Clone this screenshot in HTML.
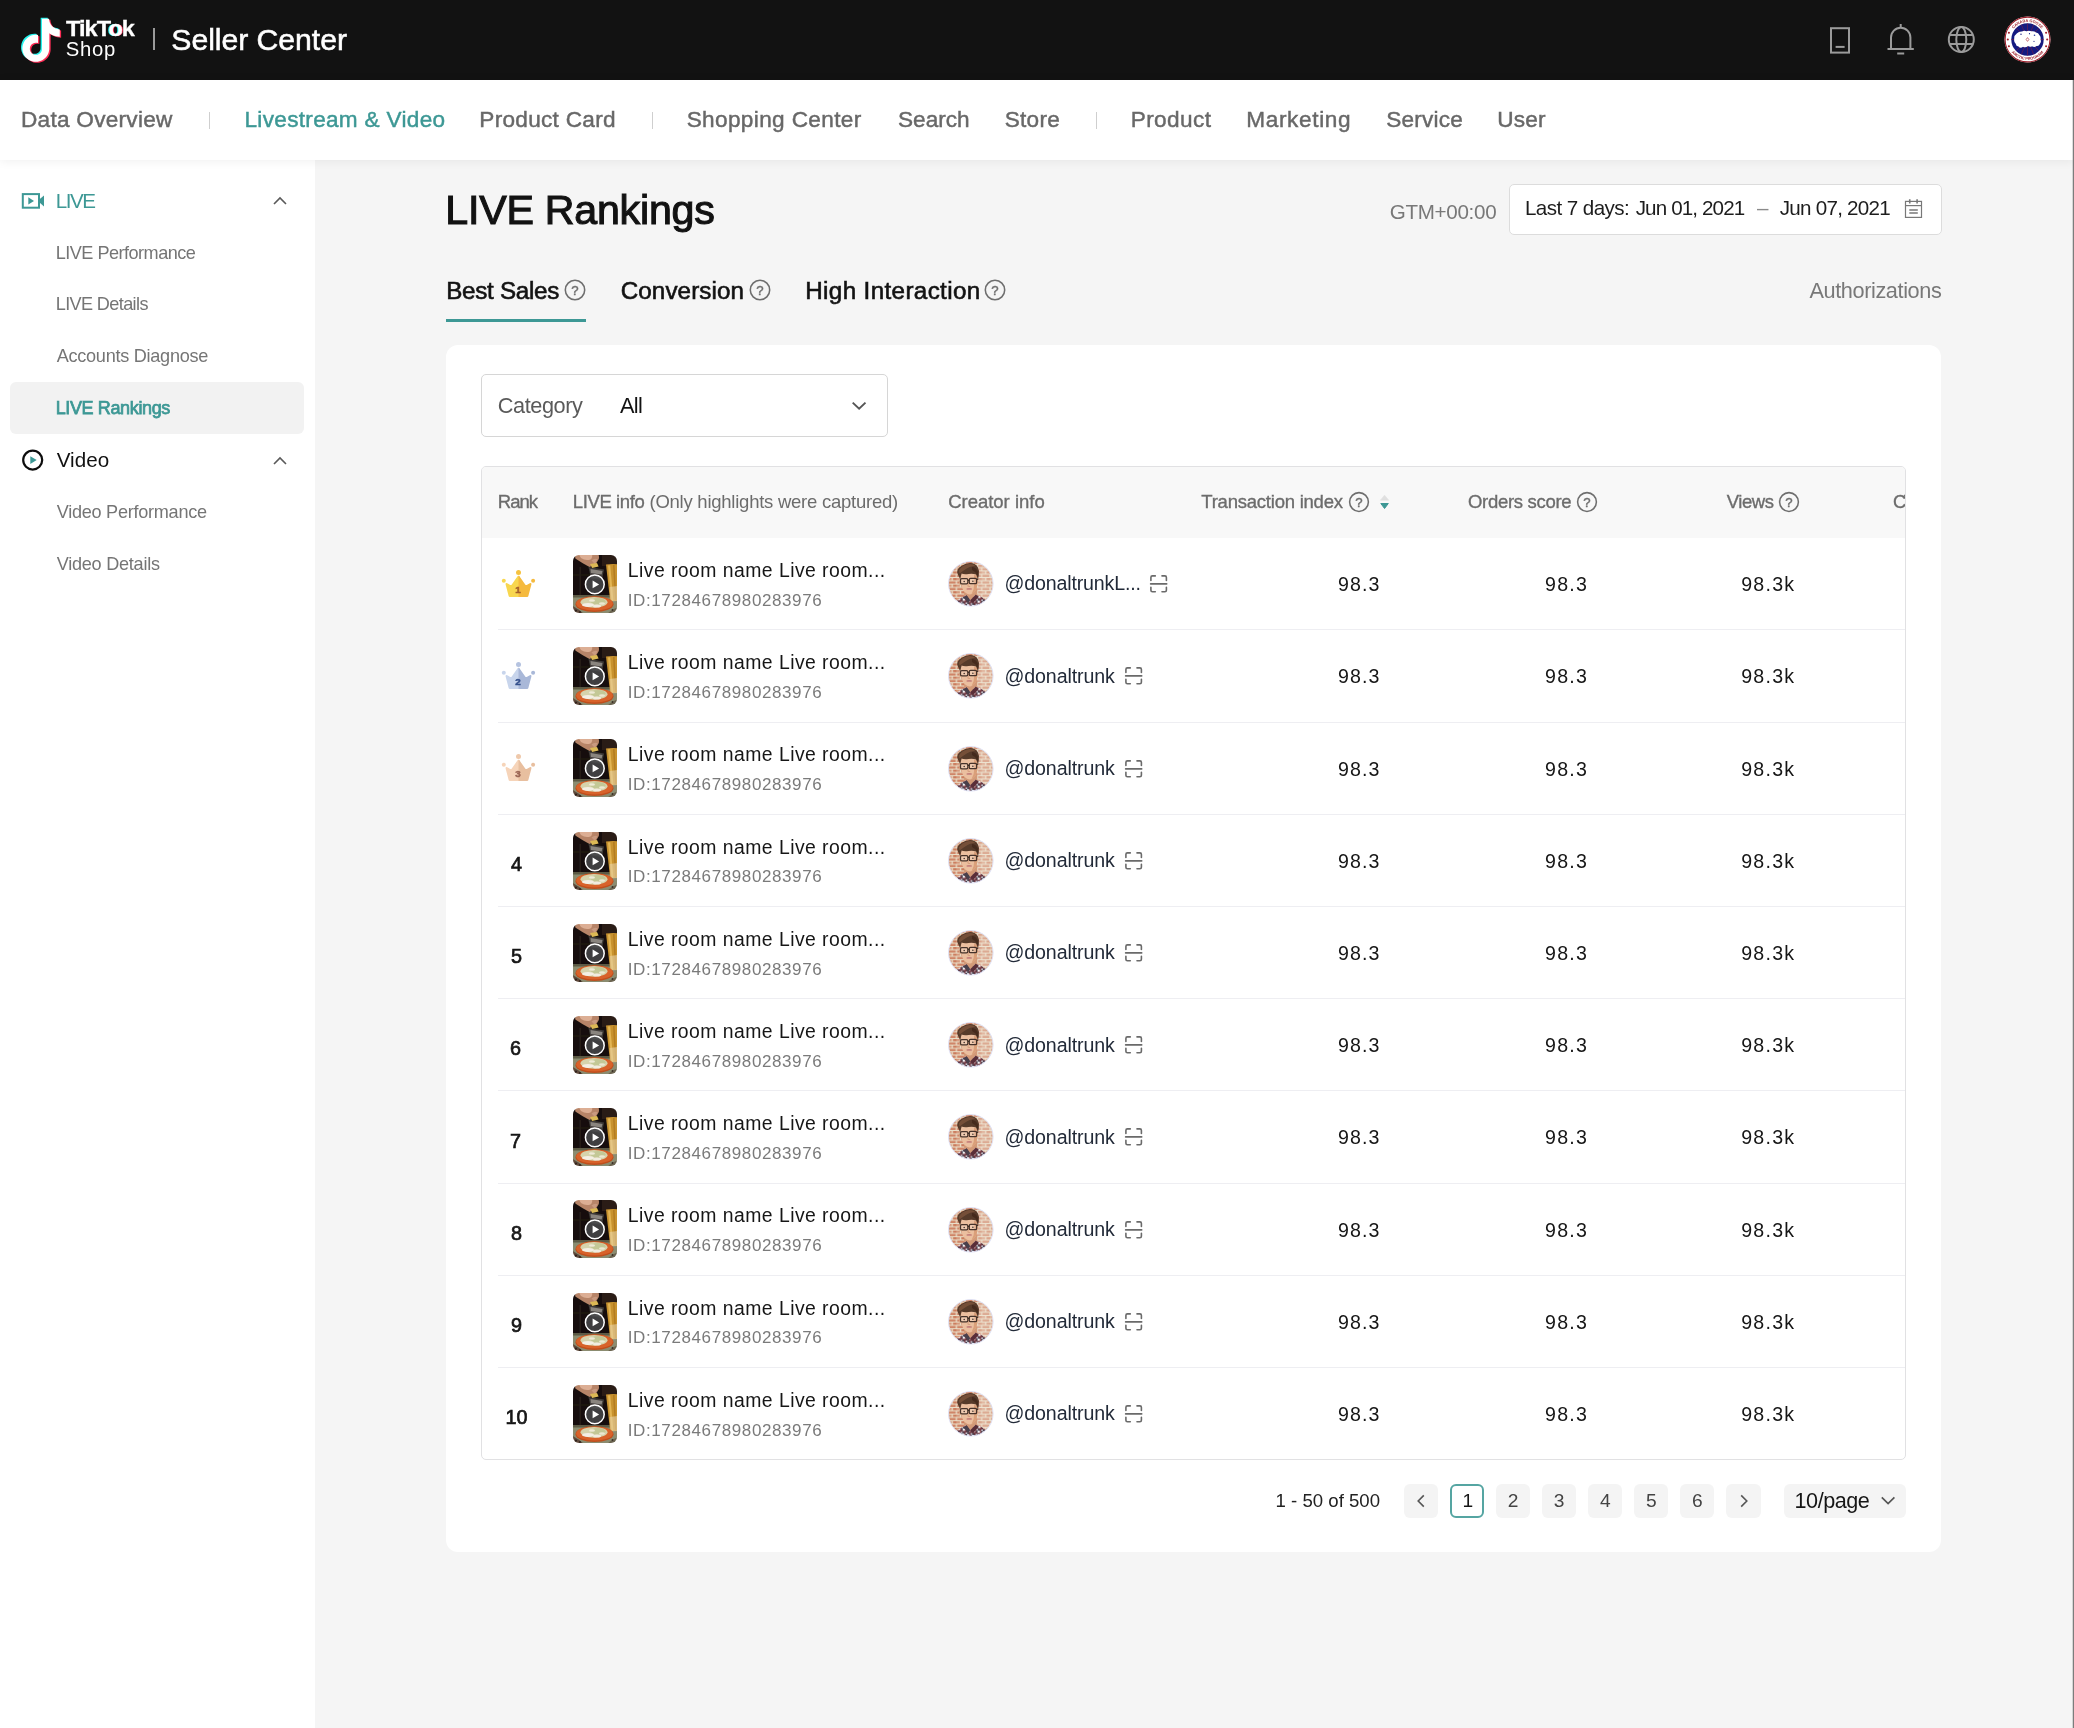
<!DOCTYPE html>
<html lang="en"><head><meta charset="utf-8"><title>LIVE Rankings - TikTok Shop Seller Center</title>
<style>
html,body{margin:0;padding:0}
body{width:2074px;height:1728px;position:relative;overflow:hidden;background:#f5f5f5;font-family:"Liberation Sans",sans-serif;-webkit-font-smoothing:antialiased}
span{display:block}
svg{display:block;overflow:visible}
</style></head><body><div id="app" style="position:absolute;left:0;top:0;width:2074px;height:1728px;overflow:hidden;will-change:transform">
<div style="position:absolute;left:0;top:0;width:2074px;height:79.5px;background:#121212"></div>
<svg style="position:absolute;left:16.2px;top:16.6px" width="50.6" height="47.0" viewBox="-2 -1 28.23 26.23">
<path d="M12.525.02c1.31-.02 2.61-.01 3.91-.02.08 1.53.63 3.09 1.75 4.17 1.12 1.11 2.7 1.62 4.24 1.79v4.03c-1.44-.05-2.89-.35-4.2-.97-.57-.26-1.1-.59-1.62-.93-.01 2.92.01 5.84-.02 8.75-.08 1.4-.54 2.79-1.35 3.94-1.31 1.92-3.58 3.17-5.91 3.21-1.43.08-2.86-.31-4.08-1.03-2.02-1.19-3.44-3.37-3.65-5.71-.02-.5-.03-1-.01-1.49.18-1.9 1.12-3.72 2.58-4.96 1.66-1.44 3.98-2.13 6.15-1.72.02 1.48-.04 2.96-.04 4.44-.99-.32-2.15-.23-3.02.37-.63.41-1.11 1.04-1.36 1.75-.21.51-.15 1.07-.14 1.61.24 1.64 1.82 3.02 3.5 2.87 1.12-.01 2.19-.66 2.77-1.61.19-.33.4-.67.41-1.06.1-1.79.06-3.57.07-5.36.01-4.03-.01-8.05.02-12.07z" fill="#25f4ee" transform="translate(-0.75,-0.6)"/>
<path d="M12.525.02c1.31-.02 2.61-.01 3.91-.02.08 1.53.63 3.09 1.75 4.17 1.12 1.11 2.7 1.62 4.24 1.79v4.03c-1.44-.05-2.89-.35-4.2-.97-.57-.26-1.1-.59-1.62-.93-.01 2.92.01 5.84-.02 8.75-.08 1.4-.54 2.79-1.35 3.94-1.31 1.92-3.58 3.17-5.91 3.21-1.43.08-2.86-.31-4.08-1.03-2.02-1.19-3.44-3.37-3.65-5.71-.02-.5-.03-1-.01-1.49.18-1.9 1.12-3.72 2.58-4.96 1.66-1.44 3.98-2.13 6.15-1.72.02 1.48-.04 2.96-.04 4.44-.99-.32-2.15-.23-3.02.37-.63.41-1.11 1.04-1.36 1.75-.21.51-.15 1.07-.14 1.61.24 1.64 1.82 3.02 3.5 2.87 1.12-.01 2.19-.66 2.77-1.61.19-.33.4-.67.41-1.06.1-1.79.06-3.57.07-5.36.01-4.03-.01-8.05.02-12.07z" fill="#fe2c55" transform="translate(0.75,0.6)"/>
<path d="M12.525.02c1.31-.02 2.61-.01 3.91-.02.08 1.53.63 3.09 1.75 4.17 1.12 1.11 2.7 1.62 4.24 1.79v4.03c-1.44-.05-2.89-.35-4.2-.97-.57-.26-1.1-.59-1.62-.93-.01 2.92.01 5.84-.02 8.75-.08 1.4-.54 2.79-1.35 3.94-1.31 1.92-3.58 3.17-5.91 3.21-1.43.08-2.86-.31-4.08-1.03-2.02-1.19-3.44-3.37-3.65-5.71-.02-.5-.03-1-.01-1.49.18-1.9 1.12-3.72 2.58-4.96 1.66-1.44 3.98-2.13 6.15-1.72.02 1.48-.04 2.96-.04 4.44-.99-.32-2.15-.23-3.02.37-.63.41-1.11 1.04-1.36 1.75-.21.51-.15 1.07-.14 1.61.24 1.64 1.82 3.02 3.5 2.87 1.12-.01 2.19-.66 2.77-1.61.19-.33.4-.67.41-1.06.1-1.79.06-3.57.07-5.36.01-4.03-.01-8.05.02-12.07z" fill="#fff"/>
</svg>
<span style="position:absolute;left:66.00px;top:18.00px;font-size:21.6px;line-height:1;color:#fff;white-space:pre;letter-spacing:-0.873px;font-weight:700;-webkit-text-stroke:0.3px #fff;transform-origin:0 50%;transform:scaleX(1.09);">TikT<b style="font-weight:700;text-shadow:-1px .4px 0 #25f4ee,1px -.4px 0 #fe2c55">o</b>k</span>
<span style="position:absolute;left:65.80px;top:39.00px;font-size:20.3px;line-height:1;color:#fff;white-space:pre;letter-spacing:0.705px;">Shop</span>
<div style="position:absolute;left:153px;top:28px;width:1.5px;height:22px;background:#9a9a9a"></div>
<span style="position:absolute;left:171.30px;top:25.00px;font-size:30.2px;line-height:1;color:#fff;white-space:pre;letter-spacing:-0.043px;-webkit-text-stroke:0.55px #fff;">Seller Center</span>
<svg style="position:absolute;left:1826px;top:23px" width="30" height="34" viewBox="1826 23 30 34" fill="none" stroke="#9b9b9b" stroke-width="2"><rect x="1831" y="28.2" width="18" height="24.4"/><path d="M1835.600 46.900H1844.600"/></svg>
<svg style="position:absolute;left:1884px;top:20px" width="34" height="38" viewBox="1884 20 34 38" fill="none" stroke="#9b9b9b" stroke-width="2"><path d="M1900.700 24V27.500"/><path d="M1891 49 V37.500 A9.700 9.700 0 0 1 1910.400 37.500 V49"/><path d="M1887.500 49H1913.800"/><path d="M1897.200 53.500H1904.200"/></svg>
<svg style="position:absolute;left:1945px;top:23px" width="33" height="33" viewBox="1945 23 33 33" fill="none" stroke="#9b9b9b" stroke-width="2"><circle cx="1961.300" cy="39.500" r="12.500"/><ellipse cx="1961.300" cy="39.500" rx="5" ry="12.500"/><path d="M1949.800 35H1972.800M1949.800 44H1972.800"/></svg>
<svg style="position:absolute;left:2004px;top:16px" width="47" height="47" viewBox="-23.500 -23.500 47 47">
<defs><path id="cgt" d="M-17.600 0 A17.600 17.600 0 0 1 17.600 0"/><path id="cgb" d="M-20.400 0 A20.400 20.400 0 0 0 20.400 0"/></defs>
<circle r="23" fill="#fff"/><circle r="22.400" fill="none" stroke="#9c1f2b" stroke-width="1.100"/>
<circle r="16.200" fill="#141a80"/>
<g stroke="#8c1f3a" stroke-width=".5"><path d="M0 -16.200V16.200M-16.200 0H16.200M-11.400 -11.400L11.400 11.400M-11.400 11.400L11.400 -11.400M-6.200 -15L6.200 15M6.200 -15L-6.200 15"/></g>
<path d="M-13.300 -.5 Q-13.600 -4 -10.500 -6.200 Q-8.500 -8.300 -5.500 -8 Q-3.500 -9.200 -1 -8.300 Q1.500 -9.300 4 -8.200 Q6.500 -8.800 8.500 -7 Q11 -6.800 11.800 -4.500 Q13.800 -2.500 13 0 Q14.200 2.500 12.300 4.500 Q11.500 7 9 6.500 Q7 8.300 4.500 6.800 Q2.500 8 .5 6.500 Q-2 8.800 -4.500 7.200 Q-7 9.300 -9 7 Q-11.500 6.800 -11.800 4.300 Q-13.800 2.500 -13.300 -.5Z" fill="#fff"/>
<circle cx="-6.500" cy="-5.200" r=".7" fill="#141a80"/><circle cx="2" cy="-5.800" r=".6" fill="#141a80"/><circle cx="7" cy="-4.200" r=".8" fill="#2b3ba0"/><circle cx="6.500" cy="1.800" r=".6" fill="#141a80"/>
<path d="M0 -1.900L1.400 0L0 1.900L-1.400 0Z" fill="#fff" stroke="#a3202c" stroke-width=".6"/>
<g fill="#a3202c"><circle cx="-18.600" cy="-6.800" r="1.050"/><circle cx="-19.700" cy="0" r="1.050"/><circle cx="-18.600" cy="6.800" r="1.050"/><circle cx="18.600" cy="-6.800" r="1.050"/><circle cx="19.700" cy="0" r="1.050"/><circle cx="18.600" cy="6.800" r="1.050"/></g>
<text font-family="Liberation Sans, sans-serif" font-weight="700" font-size="3.900" fill="#9c1f2b" text-anchor="middle"><textPath href="#cgt" startOffset="50%">CANADA GOOSE</textPath></text>
<text font-family="Liberation Sans, sans-serif" font-weight="700" font-size="3.900" fill="#9c1f2b" text-anchor="middle"><textPath href="#cgb" startOffset="50%">ARCTIC PROGRAM</textPath></text>
</svg>
<div style="position:absolute;left:0;top:79.5px;width:2074px;height:80.5px;background:#fff;box-shadow:0 1px 10px rgba(0,0,0,.065);z-index:3"></div>
<span style="position:absolute;left:21.00px;top:109.00px;font-size:22.6px;line-height:1;color:#686868;white-space:pre;letter-spacing:0.263px;-webkit-text-stroke:0.45px #686868;z-index:4;">Data Overview</span>
<span style="position:absolute;left:244.50px;top:109.00px;font-size:22.6px;line-height:1;color:#3d9895;white-space:pre;letter-spacing:0.298px;-webkit-text-stroke:0.45px #3d9895;z-index:4;">Livestream &amp; Video</span>
<span style="position:absolute;left:479.30px;top:109.00px;font-size:22.6px;line-height:1;color:#686868;white-space:pre;letter-spacing:0.287px;-webkit-text-stroke:0.45px #686868;z-index:4;">Product Card</span>
<span style="position:absolute;left:686.70px;top:109.00px;font-size:22.6px;line-height:1;color:#686868;white-space:pre;letter-spacing:0.354px;-webkit-text-stroke:0.45px #686868;z-index:4;">Shopping Center</span>
<span style="position:absolute;left:898.00px;top:109.00px;font-size:22.6px;line-height:1;color:#686868;white-space:pre;letter-spacing:-0.004px;-webkit-text-stroke:0.45px #686868;z-index:4;">Search</span>
<span style="position:absolute;left:1004.70px;top:109.00px;font-size:22.6px;line-height:1;color:#686868;white-space:pre;letter-spacing:0.291px;-webkit-text-stroke:0.45px #686868;z-index:4;">Store</span>
<span style="position:absolute;left:1130.70px;top:109.00px;font-size:22.6px;line-height:1;color:#686868;white-space:pre;letter-spacing:0.402px;-webkit-text-stroke:0.45px #686868;z-index:4;">Product</span>
<span style="position:absolute;left:1246.30px;top:109.00px;font-size:22.6px;line-height:1;color:#686868;white-space:pre;letter-spacing:0.633px;-webkit-text-stroke:0.45px #686868;z-index:4;">Marketing</span>
<span style="position:absolute;left:1386.30px;top:109.00px;font-size:22.6px;line-height:1;color:#686868;white-space:pre;letter-spacing:0.205px;-webkit-text-stroke:0.45px #686868;z-index:4;">Service</span>
<span style="position:absolute;left:1497.30px;top:109.00px;font-size:22.6px;line-height:1;color:#686868;white-space:pre;letter-spacing:0.174px;-webkit-text-stroke:0.45px #686868;z-index:4;">User</span>
<div style="position:absolute;left:208.8px;top:111.5px;width:1.5px;height:17px;background:#cfcfcf;z-index:4"></div>
<div style="position:absolute;left:651.8px;top:111.5px;width:1.5px;height:17px;background:#cfcfcf;z-index:4"></div>
<div style="position:absolute;left:1095.6px;top:111.5px;width:1.5px;height:17px;background:#cfcfcf;z-index:4"></div>
<div style="position:absolute;left:0;top:160px;width:315px;height:1568px;background:#fff"></div>
<div style="position:absolute;left:10px;top:382px;width:293.500px;height:52px;background:#f2f2f2;border-radius:6px"></div>
<svg style="position:absolute;left:20px;top:190px" width="28" height="22" viewBox="20 190 28 22"><rect x="22.800" y="194.100" width="16.200" height="13.600" fill="none" stroke="#3d9895" stroke-width="2"/><path d="M28.300 197.300L34 200.900L28.300 204.500Z" fill="#3d9895"/><path d="M39.500 199.300L44 195.600V206.500L39.500 202.600Z" fill="#3d9895"/></svg>
<span style="position:absolute;left:55.70px;top:191.00px;font-size:20.6px;line-height:1;color:#3d9895;white-space:pre;letter-spacing:-1.437px;">LIVE</span>
<span style="position:absolute;left:55.70px;top:244.00px;font-size:18.1px;line-height:1;color:#757575;white-space:pre;letter-spacing:-0.511px;">LIVE Performance</span>
<span style="position:absolute;left:55.70px;top:295.00px;font-size:18.1px;line-height:1;color:#757575;white-space:pre;letter-spacing:-0.619px;">LIVE Details</span>
<span style="position:absolute;left:56.70px;top:347.00px;font-size:18.1px;line-height:1;color:#757575;white-space:pre;letter-spacing:-0.265px;">Accounts Diagnose</span>
<span style="position:absolute;left:55.70px;top:399.00px;font-size:18.0px;line-height:1;color:#3d9895;white-space:pre;letter-spacing:-0.372px;-webkit-text-stroke:0.75px #3d9895;">LIVE Rankings</span>
<svg style="position:absolute;left:20px;top:447px" width="26" height="26" viewBox="20 447 26 26"><circle cx="32.700" cy="460.100" r="9.500" fill="none" stroke="#0d0d0d" stroke-width="2.200"/><path d="M30.300 456.300L36.700 460.100L30.300 463.900Z" fill="#3d9895"/></svg>
<span style="position:absolute;left:56.70px;top:450.00px;font-size:20.6px;line-height:1;color:#111;white-space:pre;letter-spacing:0.039px;">Video</span>
<span style="position:absolute;left:56.70px;top:503.00px;font-size:18.1px;line-height:1;color:#757575;white-space:pre;letter-spacing:-0.262px;">Video Performance</span>
<span style="position:absolute;left:56.70px;top:555.00px;font-size:18.1px;line-height:1;color:#757575;white-space:pre;letter-spacing:-0.245px;">Video Details</span>
<svg style="position:absolute;left:270px;top:193.1px" width="20" height="16" viewBox="-10 -8 20 16" fill="none" stroke="#5a5a5a" stroke-width="1.600" stroke-linejoin="miter"><path d="M-6 3L0 -3L6 3"/></svg>
<svg style="position:absolute;left:270px;top:452.5px" width="20" height="16" viewBox="-10 -8 20 16" fill="none" stroke="#5a5a5a" stroke-width="1.600" stroke-linejoin="miter"><path d="M-6 3L0 -3L6 3"/></svg>
<span style="position:absolute;left:445.30px;top:190.00px;font-size:41.2px;line-height:1;color:#121212;white-space:pre;letter-spacing:-0.246px;-webkit-text-stroke:1.1px #121212;">LIVE Rankings</span>
<span style="position:absolute;left:1389.70px;top:202.00px;font-size:20.6px;line-height:1;color:#787878;white-space:pre;letter-spacing:-0.295px;">GTM+00:00</span>
<div style="position:absolute;left:1508.500px;top:183.500px;width:433px;height:51px;box-sizing:border-box;background:#fff;border:1.500px solid #dcdcdc;border-radius:5px"></div>
<span style="position:absolute;left:1524.90px;top:198.00px;font-size:20.6px;line-height:1;color:#1d1d1d;white-space:pre;letter-spacing:-0.566px;">Last 7 days:</span>
<span style="position:absolute;left:1635.70px;top:198.00px;font-size:20.6px;line-height:1;color:#1d1d1d;white-space:pre;letter-spacing:-0.867px;">Jun 01, 2021</span>
<span style="position:absolute;left:1757.00px;top:198.00px;font-size:20.6px;line-height:1;color:#8a8a8a;white-space:pre;letter-spacing:0.000px;">–</span>
<span style="position:absolute;left:1779.70px;top:198.00px;font-size:20.6px;line-height:1;color:#1d1d1d;white-space:pre;letter-spacing:-0.730px;">Jun 07, 2021</span>
<svg style="position:absolute;left:1896px;top:190px" width="36" height="36" viewBox="0 0 36 36" fill="none" stroke="#787878"><rect x="9.500" y="11.400" width="16" height="16" stroke-width="1.200"/><path d="M9.500 15.600H25.500" stroke-width="1.200"/><path d="M13.750 9.300V13.500M21.100 9.300V13.500" stroke-width="1.600"/><path d="M13.300 20H21.800M13.300 23H21.800" stroke-width="1.300"/></svg>
<span style="position:absolute;left:446.20px;top:279.00px;font-size:24.2px;line-height:1;color:#121212;white-space:pre;letter-spacing:-0.281px;-webkit-text-stroke:0.6px #121212;">Best Sales</span>
<span style="position:absolute;left:620.75px;top:279.00px;font-size:24.2px;line-height:1;color:#121212;white-space:pre;letter-spacing:0.095px;-webkit-text-stroke:0.6px #121212;">Conversion</span>
<span style="position:absolute;left:805.25px;top:279.00px;font-size:24.2px;line-height:1;color:#121212;white-space:pre;letter-spacing:0.370px;-webkit-text-stroke:0.6px #121212;">High Interaction</span>
<svg style="position:absolute;left:562.6px;top:278px" width="24" height="24" viewBox="-12 -12 24 24"><circle r="9.70" fill="none" stroke="#6e6e6e" stroke-width="1.550"/><text x="0" y="4.800" text-anchor="middle" font-family="Liberation Sans, sans-serif" font-size="13.2" fill="#6e6e6e" stroke="#6e6e6e" stroke-width=".45">?</text></svg>
<svg style="position:absolute;left:747.6px;top:278px" width="24" height="24" viewBox="-12 -12 24 24"><circle r="9.70" fill="none" stroke="#6e6e6e" stroke-width="1.550"/><text x="0" y="4.800" text-anchor="middle" font-family="Liberation Sans, sans-serif" font-size="13.2" fill="#6e6e6e" stroke="#6e6e6e" stroke-width=".45">?</text></svg>
<svg style="position:absolute;left:982.6px;top:278px" width="24" height="24" viewBox="-12 -12 24 24"><circle r="9.70" fill="none" stroke="#6e6e6e" stroke-width="1.550"/><text x="0" y="4.800" text-anchor="middle" font-family="Liberation Sans, sans-serif" font-size="13.2" fill="#6e6e6e" stroke="#6e6e6e" stroke-width=".45">?</text></svg>
<div style="position:absolute;left:446.300px;top:319px;width:139.500px;height:3px;background:#3d9895"></div>
<span style="position:absolute;left:1809.50px;top:280.00px;font-size:21.7px;line-height:1;color:#787878;white-space:pre;letter-spacing:-0.399px;">Authorizations</span>
<div style="position:absolute;left:446.300px;top:345px;width:1495px;height:1207px;background:#fff;border-radius:12px"></div>
<div style="position:absolute;left:481px;top:374px;width:406.500px;height:63px;box-sizing:border-box;background:#fff;border:1.500px solid #d6d6d6;border-radius:5px"></div>
<span style="position:absolute;left:497.75px;top:395.00px;font-size:21.7px;line-height:1;color:#5a5a5a;white-space:pre;letter-spacing:-0.415px;">Category</span>
<span style="position:absolute;left:620.00px;top:395.00px;font-size:21.7px;line-height:1;color:#121212;white-space:pre;letter-spacing:-0.642px;">All</span>
<svg style="position:absolute;left:849px;top:397px" width="20" height="18" viewBox="849 397 20 18" fill="none" stroke="#555" stroke-width="1.900"><path d="M852.700 402.600L859.100 408.800L865.500 402.600"/></svg>
<div style="position:absolute;left:481px;top:466.300px;width:1425px;height:993.700px;box-sizing:border-box;border:1.300px solid #e1e1e3;border-radius:5px;overflow:hidden"><div style="height:70.500px;background:#f8f8f8"></div></div>
<span style="position:absolute;left:497.75px;top:493.00px;font-size:18.5px;line-height:1;color:#6c6c6c;white-space:pre;letter-spacing:-0.979px;-webkit-text-stroke:0.35px #6c6c6c;">Rank</span>
<span style="position:absolute;left:572.75px;top:493.00px;font-size:18.5px;line-height:1;color:#6c6c6c;white-space:pre;letter-spacing:-0.380px;-webkit-text-stroke:0.35px #6c6c6c;">LIVE info</span>
<span style="position:absolute;left:649.50px;top:493.00px;font-size:18.5px;line-height:1;color:#6c6c6c;white-space:pre;letter-spacing:-0.246px;">(Only highlights were captured)</span>
<span style="position:absolute;left:948.20px;top:493.00px;font-size:18.5px;line-height:1;color:#6c6c6c;white-space:pre;letter-spacing:-0.015px;-webkit-text-stroke:0.35px #6c6c6c;">Creator info</span>
<span style="position:absolute;left:1201.25px;top:493.00px;font-size:18.5px;line-height:1;color:#6c6c6c;white-space:pre;letter-spacing:-0.224px;-webkit-text-stroke:0.35px #6c6c6c;">Transaction index</span>
<span style="position:absolute;left:1468.00px;top:493.00px;font-size:18.5px;line-height:1;color:#6c6c6c;white-space:pre;letter-spacing:-0.307px;-webkit-text-stroke:0.35px #6c6c6c;">Orders score</span>
<span style="position:absolute;left:1726.75px;top:493.00px;font-size:18.5px;line-height:1;color:#6c6c6c;white-space:pre;letter-spacing:-0.441px;-webkit-text-stroke:0.35px #6c6c6c;">Views</span>
<div style="position:absolute;left:1885px;top:485px;width:20px;height:34px;overflow:hidden"><span style="position:absolute;left:7.90px;top:8.00px;font-size:18.5px;line-height:1;color:#6c6c6c;white-space:pre;letter-spacing:-2.380px;-webkit-text-stroke:0.35px #6c6c6c;">CTR</span></div>
<svg style="position:absolute;left:1346.9px;top:489.9px" width="24" height="24" viewBox="-12 -12 24 24"><circle r="9.40" fill="none" stroke="#6e6e6e" stroke-width="1.550"/><text x="0" y="4.800" text-anchor="middle" font-family="Liberation Sans, sans-serif" font-size="13.2" fill="#6e6e6e" stroke="#6e6e6e" stroke-width=".45">?</text></svg>
<svg style="position:absolute;left:1574.5px;top:489.9px" width="24" height="24" viewBox="-12 -12 24 24"><circle r="9.40" fill="none" stroke="#6e6e6e" stroke-width="1.550"/><text x="0" y="4.800" text-anchor="middle" font-family="Liberation Sans, sans-serif" font-size="13.2" fill="#6e6e6e" stroke="#6e6e6e" stroke-width=".45">?</text></svg>
<svg style="position:absolute;left:1776.7px;top:489.9px" width="24" height="24" viewBox="-12 -12 24 24"><circle r="9.40" fill="none" stroke="#6e6e6e" stroke-width="1.550"/><text x="0" y="4.800" text-anchor="middle" font-family="Liberation Sans, sans-serif" font-size="13.2" fill="#6e6e6e" stroke="#6e6e6e" stroke-width=".45">?</text></svg>
<svg style="position:absolute;left:1378px;top:492px" width="14" height="20" viewBox="1378 492 14 20"><path d="M1384.550 495.200L1388.700 500.200H1380.400Z" fill="#e0e0e0" stroke="#e0e0e0" stroke-width=".6" stroke-linejoin="round"/><path d="M1380.800 503.500H1388.300L1384.550 508.500Z" fill="#3d9895" stroke="#3d9895" stroke-width="1" stroke-linejoin="round"/></svg>
<svg style="position:absolute;left:494px;top:560.0px" width="50" height="50" viewBox="0 0 50 50">
<circle cx="24.5" cy="12.4" r="2.5" fill="#f6c23f"/><circle cx="9.8" cy="20.8" r="2" fill="#f8d74f"/><circle cx="39.1" cy="20.8" r="2" fill="#f5ba3f"/>
<path d="M24.5 15.7 Q23.7 15.9 23.2 16.8 L17.6 24.8 Q17 25.2 16.3 24.9 L13.2 23.2 Q11.4 22.6 11.6 24.4 L14.7 36.2 Q15 37 15.8 37 L25.5 37 L25.5 15.9Z" fill="#f8d74f"/>
<path d="M24.5 15.7 Q25.3 15.9 25.8 16.8 L31.4 24.8 Q32 25.2 32.7 24.9 L35.8 23.2 Q37.6 22.6 37.4 24.4 L34.3 36.2 Q34 37 33.2 37 L24.5 37Z" fill="#f5ba3f"/>
<text x="24.1" y="33.1" font-family="Liberation Sans, sans-serif" font-weight="700" font-size="9.8" text-anchor="middle" fill="#a5602a" stroke="#a5602a" stroke-width=".5">1</text>
</svg>
<svg style="position:absolute;left:573px;top:555.0px" width="44" height="58" viewBox="0 0 44 58">
<defs><clipPath id="tc"><rect width="44" height="58" rx="6"/></clipPath><filter id="tb" x="-10%" y="-10%" width="120%" height="120%"><feGaussianBlur stdDeviation="0.55"/></filter></defs>
<g clip-path="url(#tc)"><g filter="url(#tb)">
<rect x="-2" y="-2" width="48" height="62" fill="#15100e"/>
<rect x="29" y="-2" width="17" height="13" fill="#2c1d18"/>
<rect x="6.500" y="12" width="1.400" height="29" fill="#2a1e19"/><rect x="19.500" y="20" width="1.200" height="21" fill="#261b16"/><rect x="-2" y="19.500" width="32" height="1" fill="#221815"/>
<rect x="-2" y="40" width="48" height="20" fill="#8b8c70"/>
<rect x="-2" y="40" width="48" height="2.500" fill="#5b5a44"/>
<path d="M-2 50 Q6 54 12 60 L-2 60Z" fill="#5f4a3a"/>
<path d="M33 60 Q40 53 46 52 L46 60Z" fill="#6b6450"/>
<path d="M33 9.600 Q38 8.600 44.500 9.200 L44.500 45.500 L37.200 46.200 Z" fill="#c8922f"/>
<path d="M35 10.500 L37.200 10.200 L40.400 45.500 L38.600 46 Z" fill="#e3b553"/>
<path d="M40 10 L41.600 10 L43.400 45 L42.200 45Z" fill="#b37c22"/>
<path d="M36.600 32 L44.500 31 L44.500 46 L37.400 46.600 Z" fill="#e6d2a6" opacity=".6"/>
<path d="M15.500 12 L31 14.500 L29 25 L18 23.500 Z" fill="#3f3b39"/>
<path d="M17.500 14 L29.500 16 L28.600 19.500 L17.800 18 Z" fill="#8a857f"/>
<path d="M19 20 L28.400 21.300 L28 23.500 L19.300 22.500 Z" fill="#5f5a56"/>
<path d="M2 -2 L25 -2 Q26.800 2 25.500 4.600 L22.500 9.500 L16.500 12 Q9.500 8.500 2.300 3.600 Z" fill="#b78467"/>
<path d="M5 -2 L19 -2 Q20 2.500 17.500 4.500 Q12.500 6.200 8 3 Z" fill="#dcae94"/>
<path d="M18.500 5.600 Q21.500 3 24.500 4.200 L22 9 Z" fill="#c99a80"/>
<path d="M17 9 L24 8 L25.600 11.600 L19.200 13 Z" fill="#dcb955"/>
<ellipse cx="21.500" cy="49.200" rx="19" ry="7.900" fill="#c04f1d"/>
<ellipse cx="21.500" cy="48.500" rx="18.300" ry="7.100" fill="#d8622a"/>
<ellipse cx="21" cy="47.300" rx="13.500" ry="5.400" fill="#d6d3ac"/>
<ellipse cx="25" cy="46.200" rx="7.500" ry="3.200" fill="#c3c896"/>
<ellipse cx="15" cy="49.900" rx="6" ry="2" fill="#f4efe4"/><ellipse cx="19" cy="45.500" rx="3" ry="1.200" fill="#eeead6"/><ellipse cx="29" cy="48.500" rx="3" ry="1.300" fill="#ece8d2"/>
<ellipse cx="24" cy="51" rx="4" ry="1.500" fill="#f1ece0"/>
<circle cx="3" cy="55.500" r="1" fill="#2a201a"/><circle cx="7" cy="57" r=".9" fill="#2a201a"/><circle cx="39.500" cy="55" r=".9" fill="#3a3026"/>
</g>
<circle cx="21.800" cy="29.400" r="9.400" fill="#4a4b4e" fill-opacity=".8" stroke="#fff" stroke-width="1.500"/>
<path d="M19.600 25.500 L26.100 29.400 L19.600 33.300 Z" fill="#fff"/>
</g></svg>
<span style="position:absolute;left:627.75px;top:561.00px;font-size:19.4px;line-height:1;color:#161616;white-space:pre;letter-spacing:0.449px;">Live room name Live room...</span>
<span style="position:absolute;left:627.75px;top:592.00px;font-size:17.0px;line-height:1;color:#7a7a7a;white-space:pre;letter-spacing:0.605px;">ID:17284678980283976</span>
<svg style="position:absolute;left:948.1px;top:561.1px" width="45.6" height="45.6" viewBox="0 0 45.600 45.600">
<defs><clipPath id="ac"><circle cx="22.800" cy="22.800" r="22.300"/></clipPath><filter id="ab" x="-10%" y="-10%" width="120%" height="120%"><feGaussianBlur stdDeviation="0.420"/></filter>
<pattern id="bk" width="8.400" height="6.600" patternUnits="userSpaceOnUse"><rect width="8.400" height="6.600" fill="#eadfc9"/><rect x=".700" y=".500" width="7.100" height="2.300" fill="#cf8466"/><rect x="-3.500" y="3.800" width="7.100" height="2.300" fill="#d79a7d"/><rect x="4.900" y="3.800" width="7.100" height="2.300" fill="#cb7c5d"/></pattern>
<pattern id="pl" width="5" height="5" patternUnits="userSpaceOnUse" patternTransform="rotate(8)"><rect width="5" height="5" fill="#4a4856"/><rect x="0" y="0" width="2.900" height="2.900" fill="#f4f3f6"/><rect x="2.400" y="0" width="1" height="5" fill="#8c2f34"/><rect x="0" y="2.400" width="5" height="1" fill="#6d2a33"/><rect x="3.400" y="3.400" width="1.600" height="1.600" fill="#d5d3dc"/></pattern></defs>
<g clip-path="url(#ac)"><g filter="url(#ab)">
<rect x="-2" y="-2" width="50" height="50" fill="url(#bk)"/>
<rect x="29" y="-2" width="19" height="50" fill="#f3e8da" opacity=".38"/>
<path d="M16 29 L29.300 28 L29.300 38.500 L16 38.500Z" fill="#d39a78"/>
<path d="M6 47 L8.500 40.500 Q12 36.500 18.600 34.300 L22.300 39.200 L27.600 33.800 Q34 35.500 38.500 39.500 L41 47Z" fill="url(#pl)"/>
<path d="M18.600 34.300 L22.300 39.200 L20 42 L15.500 36.500Z" fill="#4a3f4c"/><path d="M27.600 33.800 L22.300 39.200 L25 42.500 L30.500 35.500Z" fill="#5a2f38"/>
<ellipse cx="12.300" cy="21.800" rx="1.300" ry="2.300" fill="#dba684"/>
<path d="M12.500 17 Q12.300 13.500 16 12.600 L27 12 Q30 13 29.800 18 Q30 25 27.600 29.600 Q24.600 33.700 21.500 33.500 Q17.500 33 14.800 28.500 Q12.700 24 12.500 17Z" fill="#ebbf9f"/>
<path d="M26 14 Q30 14 29.800 19 Q30 25 27.600 29.600 Q25.500 32.700 23.500 33.200 Q26.500 28 26.300 22Z" fill="#d4946c" opacity=".75"/>
<path d="M20.600 20.500 L19.900 25.300 L22.300 25.600" stroke="#cf9777" stroke-width=".8" fill="none"/>
<ellipse cx="21.200" cy="27.900" rx="2.900" ry=".95" fill="#c47f7a"/>
<path d="M12.300 18.400 Q10.400 15 9.200 11.800 Q8.800 8 12.600 5.400 Q17 2 22 1.900 Q27.200 2 29.700 6 Q31.800 10 30.800 14 L30 19 Q29.200 15.500 28 13.400 Q24 12.300 20.500 13.100 Q16 13.800 13.600 12.600 Q12.900 15 12.300 18.400Z" fill="#563a2a"/>
<path d="M11 9.500 Q13.500 4.500 20 3.200 Q25 2.600 27.500 5 Q22 5 18 8 Q14 10.500 11.500 12.500Z" fill="#755039"/>
<path d="M24 6 Q28.500 6.500 30 11 Q30.500 13.500 30 16 Q28.500 11 24 9Z" fill="#442a1c"/>
<g fill="#fff" fill-opacity=".18" stroke="#45332a" stroke-width="1.250"><rect x="12.500" y="17.700" width="7.300" height="5.200" rx="1.300"/><rect x="21.300" y="17.400" width="7.300" height="5.300" rx="1.300"/></g>
<path d="M19.800 19.400 L21.300 19.300 M28.600 18.600 L30.200 18" stroke="#3a2a22" stroke-width="1.300" fill="none"/>
<circle cx="16.200" cy="20.400" r=".75" fill="#3b2b25"/><circle cx="24.900" cy="20.200" r=".75" fill="#3b2b25"/>
</g></g>
<circle cx="22.800" cy="22.800" r="22.300" fill="none" stroke="#dfe2f6" stroke-width="1"/>
</svg>
<span style="position:absolute;left:1004.50px;top:574.00px;font-size:19.6px;line-height:1;color:#222a38;white-space:pre;letter-spacing:-0.155px;">@donaltrunkL...</span>
<svg style="position:absolute;left:1148.8px;top:574.2px" width="20" height="20" viewBox="-1 -1 20 20" fill="none" stroke="#6a6a6a" stroke-width="1.600" stroke-linecap="round" stroke-linejoin="round">
<path d="M0.900 5.400 V2.400 Q0.900 0.900 2.400 0.900 H5.300"/><path d="M12 0.900 H14.900 Q16.400 0.900 16.400 2.400 V5.400"/>
<path d="M0.900 12.300 V15.200 Q0.900 16.700 2.400 16.700 H5.300"/><path d="M12 16.700 H14.900 Q16.400 16.700 16.400 15.200 V12.300"/>
<path d="M0.600 8.900 H16.700"/></svg>
<span style="position:absolute;left:1338.00px;top:575.00px;font-size:19.6px;line-height:1;color:#161616;white-space:pre;letter-spacing:1.087px;">98.3</span>
<span style="position:absolute;left:1545.00px;top:575.00px;font-size:19.6px;line-height:1;color:#161616;white-space:pre;letter-spacing:1.254px;">98.3</span>
<span style="position:absolute;left:1741.25px;top:575.00px;font-size:19.6px;line-height:1;color:#161616;white-space:pre;letter-spacing:1.216px;">98.3k</span>
<div style="position:absolute;left:498px;top:629.4px;width:1407px;height:1px;background:#eeeef2"></div>
<svg style="position:absolute;left:494px;top:652.2px" width="50" height="50" viewBox="0 0 50 50">
<circle cx="24.5" cy="12.4" r="2.5" fill="#b5c3e0"/><circle cx="9.8" cy="20.8" r="2" fill="#c8d5ec"/><circle cx="39.1" cy="20.8" r="2" fill="#a9b8d8"/>
<path d="M24.5 15.7 Q23.7 15.9 23.2 16.8 L17.6 24.8 Q17 25.2 16.3 24.9 L13.2 23.2 Q11.4 22.6 11.6 24.4 L14.7 36.2 Q15 37 15.8 37 L25.5 37 L25.5 15.9Z" fill="#c8d5ec"/>
<path d="M24.5 15.7 Q25.3 15.9 25.8 16.8 L31.4 24.8 Q32 25.2 32.7 24.9 L35.8 23.2 Q37.6 22.6 37.4 24.4 L34.3 36.2 Q34 37 33.2 37 L24.5 37Z" fill="#a9b8d8"/>
<text x="24.1" y="33.1" font-family="Liberation Sans, sans-serif" font-weight="700" font-size="9.8" text-anchor="middle" fill="#34508c" stroke="#34508c" stroke-width=".5">2</text>
</svg>
<svg style="position:absolute;left:573px;top:647.2px" width="44" height="58" viewBox="0 0 44 58">
<defs><clipPath id="tc"><rect width="44" height="58" rx="6"/></clipPath><filter id="tb" x="-10%" y="-10%" width="120%" height="120%"><feGaussianBlur stdDeviation="0.55"/></filter></defs>
<g clip-path="url(#tc)"><g filter="url(#tb)">
<rect x="-2" y="-2" width="48" height="62" fill="#15100e"/>
<rect x="29" y="-2" width="17" height="13" fill="#2c1d18"/>
<rect x="6.500" y="12" width="1.400" height="29" fill="#2a1e19"/><rect x="19.500" y="20" width="1.200" height="21" fill="#261b16"/><rect x="-2" y="19.500" width="32" height="1" fill="#221815"/>
<rect x="-2" y="40" width="48" height="20" fill="#8b8c70"/>
<rect x="-2" y="40" width="48" height="2.500" fill="#5b5a44"/>
<path d="M-2 50 Q6 54 12 60 L-2 60Z" fill="#5f4a3a"/>
<path d="M33 60 Q40 53 46 52 L46 60Z" fill="#6b6450"/>
<path d="M33 9.600 Q38 8.600 44.500 9.200 L44.500 45.500 L37.200 46.200 Z" fill="#c8922f"/>
<path d="M35 10.500 L37.200 10.200 L40.400 45.500 L38.600 46 Z" fill="#e3b553"/>
<path d="M40 10 L41.600 10 L43.400 45 L42.200 45Z" fill="#b37c22"/>
<path d="M36.600 32 L44.500 31 L44.500 46 L37.400 46.600 Z" fill="#e6d2a6" opacity=".6"/>
<path d="M15.500 12 L31 14.500 L29 25 L18 23.500 Z" fill="#3f3b39"/>
<path d="M17.500 14 L29.500 16 L28.600 19.500 L17.800 18 Z" fill="#8a857f"/>
<path d="M19 20 L28.400 21.300 L28 23.500 L19.300 22.500 Z" fill="#5f5a56"/>
<path d="M2 -2 L25 -2 Q26.800 2 25.500 4.600 L22.500 9.500 L16.500 12 Q9.500 8.500 2.300 3.600 Z" fill="#b78467"/>
<path d="M5 -2 L19 -2 Q20 2.500 17.500 4.500 Q12.500 6.200 8 3 Z" fill="#dcae94"/>
<path d="M18.500 5.600 Q21.500 3 24.500 4.200 L22 9 Z" fill="#c99a80"/>
<path d="M17 9 L24 8 L25.600 11.600 L19.200 13 Z" fill="#dcb955"/>
<ellipse cx="21.500" cy="49.200" rx="19" ry="7.900" fill="#c04f1d"/>
<ellipse cx="21.500" cy="48.500" rx="18.300" ry="7.100" fill="#d8622a"/>
<ellipse cx="21" cy="47.300" rx="13.500" ry="5.400" fill="#d6d3ac"/>
<ellipse cx="25" cy="46.200" rx="7.500" ry="3.200" fill="#c3c896"/>
<ellipse cx="15" cy="49.900" rx="6" ry="2" fill="#f4efe4"/><ellipse cx="19" cy="45.500" rx="3" ry="1.200" fill="#eeead6"/><ellipse cx="29" cy="48.500" rx="3" ry="1.300" fill="#ece8d2"/>
<ellipse cx="24" cy="51" rx="4" ry="1.500" fill="#f1ece0"/>
<circle cx="3" cy="55.500" r="1" fill="#2a201a"/><circle cx="7" cy="57" r=".9" fill="#2a201a"/><circle cx="39.500" cy="55" r=".9" fill="#3a3026"/>
</g>
<circle cx="21.800" cy="29.400" r="9.400" fill="#4a4b4e" fill-opacity=".8" stroke="#fff" stroke-width="1.500"/>
<path d="M19.600 25.500 L26.100 29.400 L19.600 33.300 Z" fill="#fff"/>
</g></svg>
<span style="position:absolute;left:627.75px;top:653.00px;font-size:19.4px;line-height:1;color:#161616;white-space:pre;letter-spacing:0.449px;">Live room name Live room...</span>
<span style="position:absolute;left:627.75px;top:684.00px;font-size:17.0px;line-height:1;color:#7a7a7a;white-space:pre;letter-spacing:0.605px;">ID:17284678980283976</span>
<svg style="position:absolute;left:948.1px;top:653.3px" width="45.6" height="45.6" viewBox="0 0 45.600 45.600">
<defs><clipPath id="ac"><circle cx="22.800" cy="22.800" r="22.300"/></clipPath><filter id="ab" x="-10%" y="-10%" width="120%" height="120%"><feGaussianBlur stdDeviation="0.420"/></filter>
<pattern id="bk" width="8.400" height="6.600" patternUnits="userSpaceOnUse"><rect width="8.400" height="6.600" fill="#eadfc9"/><rect x=".700" y=".500" width="7.100" height="2.300" fill="#cf8466"/><rect x="-3.500" y="3.800" width="7.100" height="2.300" fill="#d79a7d"/><rect x="4.900" y="3.800" width="7.100" height="2.300" fill="#cb7c5d"/></pattern>
<pattern id="pl" width="5" height="5" patternUnits="userSpaceOnUse" patternTransform="rotate(8)"><rect width="5" height="5" fill="#4a4856"/><rect x="0" y="0" width="2.900" height="2.900" fill="#f4f3f6"/><rect x="2.400" y="0" width="1" height="5" fill="#8c2f34"/><rect x="0" y="2.400" width="5" height="1" fill="#6d2a33"/><rect x="3.400" y="3.400" width="1.600" height="1.600" fill="#d5d3dc"/></pattern></defs>
<g clip-path="url(#ac)"><g filter="url(#ab)">
<rect x="-2" y="-2" width="50" height="50" fill="url(#bk)"/>
<rect x="29" y="-2" width="19" height="50" fill="#f3e8da" opacity=".38"/>
<path d="M16 29 L29.300 28 L29.300 38.500 L16 38.500Z" fill="#d39a78"/>
<path d="M6 47 L8.500 40.500 Q12 36.500 18.600 34.300 L22.300 39.200 L27.600 33.800 Q34 35.500 38.500 39.500 L41 47Z" fill="url(#pl)"/>
<path d="M18.600 34.300 L22.300 39.200 L20 42 L15.500 36.500Z" fill="#4a3f4c"/><path d="M27.600 33.800 L22.300 39.200 L25 42.500 L30.500 35.500Z" fill="#5a2f38"/>
<ellipse cx="12.300" cy="21.800" rx="1.300" ry="2.300" fill="#dba684"/>
<path d="M12.500 17 Q12.300 13.500 16 12.600 L27 12 Q30 13 29.800 18 Q30 25 27.600 29.600 Q24.600 33.700 21.500 33.500 Q17.500 33 14.800 28.500 Q12.700 24 12.500 17Z" fill="#ebbf9f"/>
<path d="M26 14 Q30 14 29.800 19 Q30 25 27.600 29.600 Q25.500 32.700 23.500 33.200 Q26.500 28 26.300 22Z" fill="#d4946c" opacity=".75"/>
<path d="M20.600 20.500 L19.900 25.300 L22.300 25.600" stroke="#cf9777" stroke-width=".8" fill="none"/>
<ellipse cx="21.200" cy="27.900" rx="2.900" ry=".95" fill="#c47f7a"/>
<path d="M12.300 18.400 Q10.400 15 9.200 11.800 Q8.800 8 12.600 5.400 Q17 2 22 1.900 Q27.200 2 29.700 6 Q31.800 10 30.800 14 L30 19 Q29.200 15.500 28 13.400 Q24 12.300 20.500 13.100 Q16 13.800 13.600 12.600 Q12.900 15 12.300 18.400Z" fill="#563a2a"/>
<path d="M11 9.500 Q13.500 4.500 20 3.200 Q25 2.600 27.500 5 Q22 5 18 8 Q14 10.500 11.500 12.500Z" fill="#755039"/>
<path d="M24 6 Q28.500 6.500 30 11 Q30.500 13.500 30 16 Q28.500 11 24 9Z" fill="#442a1c"/>
<g fill="#fff" fill-opacity=".18" stroke="#45332a" stroke-width="1.250"><rect x="12.500" y="17.700" width="7.300" height="5.200" rx="1.300"/><rect x="21.300" y="17.400" width="7.300" height="5.300" rx="1.300"/></g>
<path d="M19.800 19.400 L21.300 19.300 M28.600 18.600 L30.200 18" stroke="#3a2a22" stroke-width="1.300" fill="none"/>
<circle cx="16.200" cy="20.400" r=".75" fill="#3b2b25"/><circle cx="24.900" cy="20.200" r=".75" fill="#3b2b25"/>
</g></g>
<circle cx="22.800" cy="22.800" r="22.300" fill="none" stroke="#dfe2f6" stroke-width="1"/>
</svg>
<span style="position:absolute;left:1004.50px;top:667.00px;font-size:19.6px;line-height:1;color:#222a38;white-space:pre;letter-spacing:-0.109px;">@donaltrunk</span>
<svg style="position:absolute;left:1124.4px;top:666.4px" width="20" height="20" viewBox="-1 -1 20 20" fill="none" stroke="#6a6a6a" stroke-width="1.600" stroke-linecap="round" stroke-linejoin="round">
<path d="M0.900 5.400 V2.400 Q0.900 0.900 2.400 0.900 H5.300"/><path d="M12 0.900 H14.900 Q16.400 0.900 16.400 2.400 V5.400"/>
<path d="M0.900 12.300 V15.200 Q0.900 16.700 2.400 16.700 H5.300"/><path d="M12 16.700 H14.900 Q16.400 16.700 16.400 15.200 V12.300"/>
<path d="M0.600 8.900 H16.700"/></svg>
<span style="position:absolute;left:1338.00px;top:667.00px;font-size:19.6px;line-height:1;color:#161616;white-space:pre;letter-spacing:1.087px;">98.3</span>
<span style="position:absolute;left:1545.00px;top:667.00px;font-size:19.6px;line-height:1;color:#161616;white-space:pre;letter-spacing:1.254px;">98.3</span>
<span style="position:absolute;left:1741.25px;top:667.00px;font-size:19.6px;line-height:1;color:#161616;white-space:pre;letter-spacing:1.216px;">98.3k</span>
<div style="position:absolute;left:498px;top:721.6px;width:1407px;height:1px;background:#eeeef2"></div>
<svg style="position:absolute;left:494px;top:744.4px" width="50" height="50" viewBox="0 0 50 50">
<circle cx="24.5" cy="12.4" r="2.5" fill="#efc9ab"/><circle cx="9.8" cy="20.8" r="2" fill="#f6d4b9"/><circle cx="39.1" cy="20.8" r="2" fill="#e8bf9f"/>
<path d="M24.5 15.7 Q23.7 15.9 23.2 16.8 L17.6 24.8 Q17 25.2 16.3 24.9 L13.2 23.2 Q11.4 22.6 11.6 24.4 L14.7 36.2 Q15 37 15.8 37 L25.5 37 L25.5 15.9Z" fill="#f6d4b9"/>
<path d="M24.5 15.7 Q25.3 15.9 25.8 16.8 L31.4 24.8 Q32 25.2 32.7 24.9 L35.8 23.2 Q37.6 22.6 37.4 24.4 L34.3 36.2 Q34 37 33.2 37 L24.5 37Z" fill="#e8bf9f"/>
<text x="24.1" y="33.1" font-family="Liberation Sans, sans-serif" font-weight="700" font-size="9.8" text-anchor="middle" fill="#9c6654" stroke="#9c6654" stroke-width=".5">3</text>
</svg>
<svg style="position:absolute;left:573px;top:739.4px" width="44" height="58" viewBox="0 0 44 58">
<defs><clipPath id="tc"><rect width="44" height="58" rx="6"/></clipPath><filter id="tb" x="-10%" y="-10%" width="120%" height="120%"><feGaussianBlur stdDeviation="0.55"/></filter></defs>
<g clip-path="url(#tc)"><g filter="url(#tb)">
<rect x="-2" y="-2" width="48" height="62" fill="#15100e"/>
<rect x="29" y="-2" width="17" height="13" fill="#2c1d18"/>
<rect x="6.500" y="12" width="1.400" height="29" fill="#2a1e19"/><rect x="19.500" y="20" width="1.200" height="21" fill="#261b16"/><rect x="-2" y="19.500" width="32" height="1" fill="#221815"/>
<rect x="-2" y="40" width="48" height="20" fill="#8b8c70"/>
<rect x="-2" y="40" width="48" height="2.500" fill="#5b5a44"/>
<path d="M-2 50 Q6 54 12 60 L-2 60Z" fill="#5f4a3a"/>
<path d="M33 60 Q40 53 46 52 L46 60Z" fill="#6b6450"/>
<path d="M33 9.600 Q38 8.600 44.500 9.200 L44.500 45.500 L37.200 46.200 Z" fill="#c8922f"/>
<path d="M35 10.500 L37.200 10.200 L40.400 45.500 L38.600 46 Z" fill="#e3b553"/>
<path d="M40 10 L41.600 10 L43.400 45 L42.200 45Z" fill="#b37c22"/>
<path d="M36.600 32 L44.500 31 L44.500 46 L37.400 46.600 Z" fill="#e6d2a6" opacity=".6"/>
<path d="M15.500 12 L31 14.500 L29 25 L18 23.500 Z" fill="#3f3b39"/>
<path d="M17.500 14 L29.500 16 L28.600 19.500 L17.800 18 Z" fill="#8a857f"/>
<path d="M19 20 L28.400 21.300 L28 23.500 L19.300 22.500 Z" fill="#5f5a56"/>
<path d="M2 -2 L25 -2 Q26.800 2 25.500 4.600 L22.500 9.500 L16.500 12 Q9.500 8.500 2.300 3.600 Z" fill="#b78467"/>
<path d="M5 -2 L19 -2 Q20 2.500 17.500 4.500 Q12.500 6.200 8 3 Z" fill="#dcae94"/>
<path d="M18.500 5.600 Q21.500 3 24.500 4.200 L22 9 Z" fill="#c99a80"/>
<path d="M17 9 L24 8 L25.600 11.600 L19.200 13 Z" fill="#dcb955"/>
<ellipse cx="21.500" cy="49.200" rx="19" ry="7.900" fill="#c04f1d"/>
<ellipse cx="21.500" cy="48.500" rx="18.300" ry="7.100" fill="#d8622a"/>
<ellipse cx="21" cy="47.300" rx="13.500" ry="5.400" fill="#d6d3ac"/>
<ellipse cx="25" cy="46.200" rx="7.500" ry="3.200" fill="#c3c896"/>
<ellipse cx="15" cy="49.900" rx="6" ry="2" fill="#f4efe4"/><ellipse cx="19" cy="45.500" rx="3" ry="1.200" fill="#eeead6"/><ellipse cx="29" cy="48.500" rx="3" ry="1.300" fill="#ece8d2"/>
<ellipse cx="24" cy="51" rx="4" ry="1.500" fill="#f1ece0"/>
<circle cx="3" cy="55.500" r="1" fill="#2a201a"/><circle cx="7" cy="57" r=".9" fill="#2a201a"/><circle cx="39.500" cy="55" r=".9" fill="#3a3026"/>
</g>
<circle cx="21.800" cy="29.400" r="9.400" fill="#4a4b4e" fill-opacity=".8" stroke="#fff" stroke-width="1.500"/>
<path d="M19.600 25.500 L26.100 29.400 L19.600 33.300 Z" fill="#fff"/>
</g></svg>
<span style="position:absolute;left:627.75px;top:745.00px;font-size:19.4px;line-height:1;color:#161616;white-space:pre;letter-spacing:0.449px;">Live room name Live room...</span>
<span style="position:absolute;left:627.75px;top:776.00px;font-size:17.0px;line-height:1;color:#7a7a7a;white-space:pre;letter-spacing:0.605px;">ID:17284678980283976</span>
<svg style="position:absolute;left:948.1px;top:745.5px" width="45.6" height="45.6" viewBox="0 0 45.600 45.600">
<defs><clipPath id="ac"><circle cx="22.800" cy="22.800" r="22.300"/></clipPath><filter id="ab" x="-10%" y="-10%" width="120%" height="120%"><feGaussianBlur stdDeviation="0.420"/></filter>
<pattern id="bk" width="8.400" height="6.600" patternUnits="userSpaceOnUse"><rect width="8.400" height="6.600" fill="#eadfc9"/><rect x=".700" y=".500" width="7.100" height="2.300" fill="#cf8466"/><rect x="-3.500" y="3.800" width="7.100" height="2.300" fill="#d79a7d"/><rect x="4.900" y="3.800" width="7.100" height="2.300" fill="#cb7c5d"/></pattern>
<pattern id="pl" width="5" height="5" patternUnits="userSpaceOnUse" patternTransform="rotate(8)"><rect width="5" height="5" fill="#4a4856"/><rect x="0" y="0" width="2.900" height="2.900" fill="#f4f3f6"/><rect x="2.400" y="0" width="1" height="5" fill="#8c2f34"/><rect x="0" y="2.400" width="5" height="1" fill="#6d2a33"/><rect x="3.400" y="3.400" width="1.600" height="1.600" fill="#d5d3dc"/></pattern></defs>
<g clip-path="url(#ac)"><g filter="url(#ab)">
<rect x="-2" y="-2" width="50" height="50" fill="url(#bk)"/>
<rect x="29" y="-2" width="19" height="50" fill="#f3e8da" opacity=".38"/>
<path d="M16 29 L29.300 28 L29.300 38.500 L16 38.500Z" fill="#d39a78"/>
<path d="M6 47 L8.500 40.500 Q12 36.500 18.600 34.300 L22.300 39.200 L27.600 33.800 Q34 35.500 38.500 39.500 L41 47Z" fill="url(#pl)"/>
<path d="M18.600 34.300 L22.300 39.200 L20 42 L15.500 36.500Z" fill="#4a3f4c"/><path d="M27.600 33.800 L22.300 39.200 L25 42.500 L30.500 35.500Z" fill="#5a2f38"/>
<ellipse cx="12.300" cy="21.800" rx="1.300" ry="2.300" fill="#dba684"/>
<path d="M12.500 17 Q12.300 13.500 16 12.600 L27 12 Q30 13 29.800 18 Q30 25 27.600 29.600 Q24.600 33.700 21.500 33.500 Q17.500 33 14.800 28.500 Q12.700 24 12.500 17Z" fill="#ebbf9f"/>
<path d="M26 14 Q30 14 29.800 19 Q30 25 27.600 29.600 Q25.500 32.700 23.500 33.200 Q26.500 28 26.300 22Z" fill="#d4946c" opacity=".75"/>
<path d="M20.600 20.500 L19.900 25.300 L22.300 25.600" stroke="#cf9777" stroke-width=".8" fill="none"/>
<ellipse cx="21.200" cy="27.900" rx="2.900" ry=".95" fill="#c47f7a"/>
<path d="M12.300 18.400 Q10.400 15 9.200 11.800 Q8.800 8 12.600 5.400 Q17 2 22 1.900 Q27.200 2 29.700 6 Q31.800 10 30.800 14 L30 19 Q29.200 15.500 28 13.400 Q24 12.300 20.500 13.100 Q16 13.800 13.600 12.600 Q12.900 15 12.300 18.400Z" fill="#563a2a"/>
<path d="M11 9.500 Q13.500 4.500 20 3.200 Q25 2.600 27.500 5 Q22 5 18 8 Q14 10.500 11.500 12.500Z" fill="#755039"/>
<path d="M24 6 Q28.500 6.500 30 11 Q30.500 13.500 30 16 Q28.500 11 24 9Z" fill="#442a1c"/>
<g fill="#fff" fill-opacity=".18" stroke="#45332a" stroke-width="1.250"><rect x="12.500" y="17.700" width="7.300" height="5.200" rx="1.300"/><rect x="21.300" y="17.400" width="7.300" height="5.300" rx="1.300"/></g>
<path d="M19.800 19.400 L21.300 19.300 M28.600 18.600 L30.200 18" stroke="#3a2a22" stroke-width="1.300" fill="none"/>
<circle cx="16.200" cy="20.400" r=".75" fill="#3b2b25"/><circle cx="24.900" cy="20.200" r=".75" fill="#3b2b25"/>
</g></g>
<circle cx="22.800" cy="22.800" r="22.300" fill="none" stroke="#dfe2f6" stroke-width="1"/>
</svg>
<span style="position:absolute;left:1004.50px;top:759.00px;font-size:19.6px;line-height:1;color:#222a38;white-space:pre;letter-spacing:-0.109px;">@donaltrunk</span>
<svg style="position:absolute;left:1124.4px;top:758.6px" width="20" height="20" viewBox="-1 -1 20 20" fill="none" stroke="#6a6a6a" stroke-width="1.600" stroke-linecap="round" stroke-linejoin="round">
<path d="M0.900 5.400 V2.400 Q0.900 0.900 2.400 0.900 H5.300"/><path d="M12 0.900 H14.900 Q16.400 0.900 16.400 2.400 V5.400"/>
<path d="M0.900 12.300 V15.200 Q0.900 16.700 2.400 16.700 H5.300"/><path d="M12 16.700 H14.900 Q16.400 16.700 16.400 15.200 V12.300"/>
<path d="M0.600 8.900 H16.700"/></svg>
<span style="position:absolute;left:1338.00px;top:760.00px;font-size:19.6px;line-height:1;color:#161616;white-space:pre;letter-spacing:1.087px;">98.3</span>
<span style="position:absolute;left:1545.00px;top:760.00px;font-size:19.6px;line-height:1;color:#161616;white-space:pre;letter-spacing:1.254px;">98.3</span>
<span style="position:absolute;left:1741.25px;top:760.00px;font-size:19.6px;line-height:1;color:#161616;white-space:pre;letter-spacing:1.216px;">98.3k</span>
<div style="position:absolute;left:498px;top:813.8px;width:1407px;height:1px;background:#eeeef2"></div>
<span style="position:absolute;left:511.00px;top:855.00px;font-size:19.8px;line-height:1;color:#161616;white-space:pre;letter-spacing:0.000px;-webkit-text-stroke:0.7px #161616;">4</span>
<svg style="position:absolute;left:573px;top:831.6px" width="44" height="58" viewBox="0 0 44 58">
<defs><clipPath id="tc"><rect width="44" height="58" rx="6"/></clipPath><filter id="tb" x="-10%" y="-10%" width="120%" height="120%"><feGaussianBlur stdDeviation="0.55"/></filter></defs>
<g clip-path="url(#tc)"><g filter="url(#tb)">
<rect x="-2" y="-2" width="48" height="62" fill="#15100e"/>
<rect x="29" y="-2" width="17" height="13" fill="#2c1d18"/>
<rect x="6.500" y="12" width="1.400" height="29" fill="#2a1e19"/><rect x="19.500" y="20" width="1.200" height="21" fill="#261b16"/><rect x="-2" y="19.500" width="32" height="1" fill="#221815"/>
<rect x="-2" y="40" width="48" height="20" fill="#8b8c70"/>
<rect x="-2" y="40" width="48" height="2.500" fill="#5b5a44"/>
<path d="M-2 50 Q6 54 12 60 L-2 60Z" fill="#5f4a3a"/>
<path d="M33 60 Q40 53 46 52 L46 60Z" fill="#6b6450"/>
<path d="M33 9.600 Q38 8.600 44.500 9.200 L44.500 45.500 L37.200 46.200 Z" fill="#c8922f"/>
<path d="M35 10.500 L37.200 10.200 L40.400 45.500 L38.600 46 Z" fill="#e3b553"/>
<path d="M40 10 L41.600 10 L43.400 45 L42.200 45Z" fill="#b37c22"/>
<path d="M36.600 32 L44.500 31 L44.500 46 L37.400 46.600 Z" fill="#e6d2a6" opacity=".6"/>
<path d="M15.500 12 L31 14.500 L29 25 L18 23.500 Z" fill="#3f3b39"/>
<path d="M17.500 14 L29.500 16 L28.600 19.500 L17.800 18 Z" fill="#8a857f"/>
<path d="M19 20 L28.400 21.300 L28 23.500 L19.300 22.500 Z" fill="#5f5a56"/>
<path d="M2 -2 L25 -2 Q26.800 2 25.500 4.600 L22.500 9.500 L16.500 12 Q9.500 8.500 2.300 3.600 Z" fill="#b78467"/>
<path d="M5 -2 L19 -2 Q20 2.500 17.500 4.500 Q12.500 6.200 8 3 Z" fill="#dcae94"/>
<path d="M18.500 5.600 Q21.500 3 24.500 4.200 L22 9 Z" fill="#c99a80"/>
<path d="M17 9 L24 8 L25.600 11.600 L19.200 13 Z" fill="#dcb955"/>
<ellipse cx="21.500" cy="49.200" rx="19" ry="7.900" fill="#c04f1d"/>
<ellipse cx="21.500" cy="48.500" rx="18.300" ry="7.100" fill="#d8622a"/>
<ellipse cx="21" cy="47.300" rx="13.500" ry="5.400" fill="#d6d3ac"/>
<ellipse cx="25" cy="46.200" rx="7.500" ry="3.200" fill="#c3c896"/>
<ellipse cx="15" cy="49.900" rx="6" ry="2" fill="#f4efe4"/><ellipse cx="19" cy="45.500" rx="3" ry="1.200" fill="#eeead6"/><ellipse cx="29" cy="48.500" rx="3" ry="1.300" fill="#ece8d2"/>
<ellipse cx="24" cy="51" rx="4" ry="1.500" fill="#f1ece0"/>
<circle cx="3" cy="55.500" r="1" fill="#2a201a"/><circle cx="7" cy="57" r=".9" fill="#2a201a"/><circle cx="39.500" cy="55" r=".9" fill="#3a3026"/>
</g>
<circle cx="21.800" cy="29.400" r="9.400" fill="#4a4b4e" fill-opacity=".8" stroke="#fff" stroke-width="1.500"/>
<path d="M19.600 25.500 L26.100 29.400 L19.600 33.300 Z" fill="#fff"/>
</g></svg>
<span style="position:absolute;left:627.75px;top:838.00px;font-size:19.4px;line-height:1;color:#161616;white-space:pre;letter-spacing:0.449px;">Live room name Live room...</span>
<span style="position:absolute;left:627.75px;top:868.00px;font-size:17.0px;line-height:1;color:#7a7a7a;white-space:pre;letter-spacing:0.605px;">ID:17284678980283976</span>
<svg style="position:absolute;left:948.1px;top:837.7px" width="45.6" height="45.6" viewBox="0 0 45.600 45.600">
<defs><clipPath id="ac"><circle cx="22.800" cy="22.800" r="22.300"/></clipPath><filter id="ab" x="-10%" y="-10%" width="120%" height="120%"><feGaussianBlur stdDeviation="0.420"/></filter>
<pattern id="bk" width="8.400" height="6.600" patternUnits="userSpaceOnUse"><rect width="8.400" height="6.600" fill="#eadfc9"/><rect x=".700" y=".500" width="7.100" height="2.300" fill="#cf8466"/><rect x="-3.500" y="3.800" width="7.100" height="2.300" fill="#d79a7d"/><rect x="4.900" y="3.800" width="7.100" height="2.300" fill="#cb7c5d"/></pattern>
<pattern id="pl" width="5" height="5" patternUnits="userSpaceOnUse" patternTransform="rotate(8)"><rect width="5" height="5" fill="#4a4856"/><rect x="0" y="0" width="2.900" height="2.900" fill="#f4f3f6"/><rect x="2.400" y="0" width="1" height="5" fill="#8c2f34"/><rect x="0" y="2.400" width="5" height="1" fill="#6d2a33"/><rect x="3.400" y="3.400" width="1.600" height="1.600" fill="#d5d3dc"/></pattern></defs>
<g clip-path="url(#ac)"><g filter="url(#ab)">
<rect x="-2" y="-2" width="50" height="50" fill="url(#bk)"/>
<rect x="29" y="-2" width="19" height="50" fill="#f3e8da" opacity=".38"/>
<path d="M16 29 L29.300 28 L29.300 38.500 L16 38.500Z" fill="#d39a78"/>
<path d="M6 47 L8.500 40.500 Q12 36.500 18.600 34.300 L22.300 39.200 L27.600 33.800 Q34 35.500 38.500 39.500 L41 47Z" fill="url(#pl)"/>
<path d="M18.600 34.300 L22.300 39.200 L20 42 L15.500 36.500Z" fill="#4a3f4c"/><path d="M27.600 33.800 L22.300 39.200 L25 42.500 L30.500 35.500Z" fill="#5a2f38"/>
<ellipse cx="12.300" cy="21.800" rx="1.300" ry="2.300" fill="#dba684"/>
<path d="M12.500 17 Q12.300 13.500 16 12.600 L27 12 Q30 13 29.800 18 Q30 25 27.600 29.600 Q24.600 33.700 21.500 33.500 Q17.500 33 14.800 28.500 Q12.700 24 12.500 17Z" fill="#ebbf9f"/>
<path d="M26 14 Q30 14 29.800 19 Q30 25 27.600 29.600 Q25.500 32.700 23.500 33.200 Q26.500 28 26.300 22Z" fill="#d4946c" opacity=".75"/>
<path d="M20.600 20.500 L19.900 25.300 L22.300 25.600" stroke="#cf9777" stroke-width=".8" fill="none"/>
<ellipse cx="21.200" cy="27.900" rx="2.900" ry=".95" fill="#c47f7a"/>
<path d="M12.300 18.400 Q10.400 15 9.200 11.800 Q8.800 8 12.600 5.400 Q17 2 22 1.900 Q27.200 2 29.700 6 Q31.800 10 30.800 14 L30 19 Q29.200 15.500 28 13.400 Q24 12.300 20.500 13.100 Q16 13.800 13.600 12.600 Q12.900 15 12.300 18.400Z" fill="#563a2a"/>
<path d="M11 9.500 Q13.500 4.500 20 3.200 Q25 2.600 27.500 5 Q22 5 18 8 Q14 10.500 11.500 12.500Z" fill="#755039"/>
<path d="M24 6 Q28.500 6.500 30 11 Q30.500 13.500 30 16 Q28.500 11 24 9Z" fill="#442a1c"/>
<g fill="#fff" fill-opacity=".18" stroke="#45332a" stroke-width="1.250"><rect x="12.500" y="17.700" width="7.300" height="5.200" rx="1.300"/><rect x="21.300" y="17.400" width="7.300" height="5.300" rx="1.300"/></g>
<path d="M19.800 19.400 L21.300 19.300 M28.600 18.600 L30.200 18" stroke="#3a2a22" stroke-width="1.300" fill="none"/>
<circle cx="16.200" cy="20.400" r=".75" fill="#3b2b25"/><circle cx="24.900" cy="20.200" r=".75" fill="#3b2b25"/>
</g></g>
<circle cx="22.800" cy="22.800" r="22.300" fill="none" stroke="#dfe2f6" stroke-width="1"/>
</svg>
<span style="position:absolute;left:1004.50px;top:851.00px;font-size:19.6px;line-height:1;color:#222a38;white-space:pre;letter-spacing:-0.109px;">@donaltrunk</span>
<svg style="position:absolute;left:1124.4px;top:850.8px" width="20" height="20" viewBox="-1 -1 20 20" fill="none" stroke="#6a6a6a" stroke-width="1.600" stroke-linecap="round" stroke-linejoin="round">
<path d="M0.900 5.400 V2.400 Q0.900 0.900 2.400 0.900 H5.300"/><path d="M12 0.900 H14.900 Q16.400 0.900 16.400 2.400 V5.400"/>
<path d="M0.900 12.300 V15.200 Q0.900 16.700 2.400 16.700 H5.300"/><path d="M12 16.700 H14.900 Q16.400 16.700 16.400 15.200 V12.300"/>
<path d="M0.600 8.900 H16.700"/></svg>
<span style="position:absolute;left:1338.00px;top:852.00px;font-size:19.6px;line-height:1;color:#161616;white-space:pre;letter-spacing:1.087px;">98.3</span>
<span style="position:absolute;left:1545.00px;top:852.00px;font-size:19.6px;line-height:1;color:#161616;white-space:pre;letter-spacing:1.254px;">98.3</span>
<span style="position:absolute;left:1741.25px;top:852.00px;font-size:19.6px;line-height:1;color:#161616;white-space:pre;letter-spacing:1.216px;">98.3k</span>
<div style="position:absolute;left:498px;top:906.0px;width:1407px;height:1px;background:#eeeef2"></div>
<span style="position:absolute;left:511.00px;top:947.00px;font-size:19.8px;line-height:1;color:#161616;white-space:pre;letter-spacing:0.000px;-webkit-text-stroke:0.7px #161616;">5</span>
<svg style="position:absolute;left:573px;top:923.8px" width="44" height="58" viewBox="0 0 44 58">
<defs><clipPath id="tc"><rect width="44" height="58" rx="6"/></clipPath><filter id="tb" x="-10%" y="-10%" width="120%" height="120%"><feGaussianBlur stdDeviation="0.55"/></filter></defs>
<g clip-path="url(#tc)"><g filter="url(#tb)">
<rect x="-2" y="-2" width="48" height="62" fill="#15100e"/>
<rect x="29" y="-2" width="17" height="13" fill="#2c1d18"/>
<rect x="6.500" y="12" width="1.400" height="29" fill="#2a1e19"/><rect x="19.500" y="20" width="1.200" height="21" fill="#261b16"/><rect x="-2" y="19.500" width="32" height="1" fill="#221815"/>
<rect x="-2" y="40" width="48" height="20" fill="#8b8c70"/>
<rect x="-2" y="40" width="48" height="2.500" fill="#5b5a44"/>
<path d="M-2 50 Q6 54 12 60 L-2 60Z" fill="#5f4a3a"/>
<path d="M33 60 Q40 53 46 52 L46 60Z" fill="#6b6450"/>
<path d="M33 9.600 Q38 8.600 44.500 9.200 L44.500 45.500 L37.200 46.200 Z" fill="#c8922f"/>
<path d="M35 10.500 L37.200 10.200 L40.400 45.500 L38.600 46 Z" fill="#e3b553"/>
<path d="M40 10 L41.600 10 L43.400 45 L42.200 45Z" fill="#b37c22"/>
<path d="M36.600 32 L44.500 31 L44.500 46 L37.400 46.600 Z" fill="#e6d2a6" opacity=".6"/>
<path d="M15.500 12 L31 14.500 L29 25 L18 23.500 Z" fill="#3f3b39"/>
<path d="M17.500 14 L29.500 16 L28.600 19.500 L17.800 18 Z" fill="#8a857f"/>
<path d="M19 20 L28.400 21.300 L28 23.500 L19.300 22.500 Z" fill="#5f5a56"/>
<path d="M2 -2 L25 -2 Q26.800 2 25.500 4.600 L22.500 9.500 L16.500 12 Q9.500 8.500 2.300 3.600 Z" fill="#b78467"/>
<path d="M5 -2 L19 -2 Q20 2.500 17.500 4.500 Q12.500 6.200 8 3 Z" fill="#dcae94"/>
<path d="M18.500 5.600 Q21.500 3 24.500 4.200 L22 9 Z" fill="#c99a80"/>
<path d="M17 9 L24 8 L25.600 11.600 L19.200 13 Z" fill="#dcb955"/>
<ellipse cx="21.500" cy="49.200" rx="19" ry="7.900" fill="#c04f1d"/>
<ellipse cx="21.500" cy="48.500" rx="18.300" ry="7.100" fill="#d8622a"/>
<ellipse cx="21" cy="47.300" rx="13.500" ry="5.400" fill="#d6d3ac"/>
<ellipse cx="25" cy="46.200" rx="7.500" ry="3.200" fill="#c3c896"/>
<ellipse cx="15" cy="49.900" rx="6" ry="2" fill="#f4efe4"/><ellipse cx="19" cy="45.500" rx="3" ry="1.200" fill="#eeead6"/><ellipse cx="29" cy="48.500" rx="3" ry="1.300" fill="#ece8d2"/>
<ellipse cx="24" cy="51" rx="4" ry="1.500" fill="#f1ece0"/>
<circle cx="3" cy="55.500" r="1" fill="#2a201a"/><circle cx="7" cy="57" r=".9" fill="#2a201a"/><circle cx="39.500" cy="55" r=".9" fill="#3a3026"/>
</g>
<circle cx="21.800" cy="29.400" r="9.400" fill="#4a4b4e" fill-opacity=".8" stroke="#fff" stroke-width="1.500"/>
<path d="M19.600 25.500 L26.100 29.400 L19.600 33.300 Z" fill="#fff"/>
</g></svg>
<span style="position:absolute;left:627.75px;top:930.00px;font-size:19.4px;line-height:1;color:#161616;white-space:pre;letter-spacing:0.449px;">Live room name Live room...</span>
<span style="position:absolute;left:627.75px;top:961.00px;font-size:17.0px;line-height:1;color:#7a7a7a;white-space:pre;letter-spacing:0.605px;">ID:17284678980283976</span>
<svg style="position:absolute;left:948.1px;top:929.9px" width="45.6" height="45.6" viewBox="0 0 45.600 45.600">
<defs><clipPath id="ac"><circle cx="22.800" cy="22.800" r="22.300"/></clipPath><filter id="ab" x="-10%" y="-10%" width="120%" height="120%"><feGaussianBlur stdDeviation="0.420"/></filter>
<pattern id="bk" width="8.400" height="6.600" patternUnits="userSpaceOnUse"><rect width="8.400" height="6.600" fill="#eadfc9"/><rect x=".700" y=".500" width="7.100" height="2.300" fill="#cf8466"/><rect x="-3.500" y="3.800" width="7.100" height="2.300" fill="#d79a7d"/><rect x="4.900" y="3.800" width="7.100" height="2.300" fill="#cb7c5d"/></pattern>
<pattern id="pl" width="5" height="5" patternUnits="userSpaceOnUse" patternTransform="rotate(8)"><rect width="5" height="5" fill="#4a4856"/><rect x="0" y="0" width="2.900" height="2.900" fill="#f4f3f6"/><rect x="2.400" y="0" width="1" height="5" fill="#8c2f34"/><rect x="0" y="2.400" width="5" height="1" fill="#6d2a33"/><rect x="3.400" y="3.400" width="1.600" height="1.600" fill="#d5d3dc"/></pattern></defs>
<g clip-path="url(#ac)"><g filter="url(#ab)">
<rect x="-2" y="-2" width="50" height="50" fill="url(#bk)"/>
<rect x="29" y="-2" width="19" height="50" fill="#f3e8da" opacity=".38"/>
<path d="M16 29 L29.300 28 L29.300 38.500 L16 38.500Z" fill="#d39a78"/>
<path d="M6 47 L8.500 40.500 Q12 36.500 18.600 34.300 L22.300 39.200 L27.600 33.800 Q34 35.500 38.500 39.500 L41 47Z" fill="url(#pl)"/>
<path d="M18.600 34.300 L22.300 39.200 L20 42 L15.500 36.500Z" fill="#4a3f4c"/><path d="M27.600 33.800 L22.300 39.200 L25 42.500 L30.500 35.500Z" fill="#5a2f38"/>
<ellipse cx="12.300" cy="21.800" rx="1.300" ry="2.300" fill="#dba684"/>
<path d="M12.500 17 Q12.300 13.500 16 12.600 L27 12 Q30 13 29.800 18 Q30 25 27.600 29.600 Q24.600 33.700 21.500 33.500 Q17.500 33 14.800 28.500 Q12.700 24 12.500 17Z" fill="#ebbf9f"/>
<path d="M26 14 Q30 14 29.800 19 Q30 25 27.600 29.600 Q25.500 32.700 23.500 33.200 Q26.500 28 26.300 22Z" fill="#d4946c" opacity=".75"/>
<path d="M20.600 20.500 L19.900 25.300 L22.300 25.600" stroke="#cf9777" stroke-width=".8" fill="none"/>
<ellipse cx="21.200" cy="27.900" rx="2.900" ry=".95" fill="#c47f7a"/>
<path d="M12.300 18.400 Q10.400 15 9.200 11.800 Q8.800 8 12.600 5.400 Q17 2 22 1.900 Q27.200 2 29.700 6 Q31.800 10 30.800 14 L30 19 Q29.200 15.500 28 13.400 Q24 12.300 20.500 13.100 Q16 13.800 13.600 12.600 Q12.900 15 12.300 18.400Z" fill="#563a2a"/>
<path d="M11 9.500 Q13.500 4.500 20 3.200 Q25 2.600 27.500 5 Q22 5 18 8 Q14 10.500 11.500 12.500Z" fill="#755039"/>
<path d="M24 6 Q28.500 6.500 30 11 Q30.500 13.500 30 16 Q28.500 11 24 9Z" fill="#442a1c"/>
<g fill="#fff" fill-opacity=".18" stroke="#45332a" stroke-width="1.250"><rect x="12.500" y="17.700" width="7.300" height="5.200" rx="1.300"/><rect x="21.300" y="17.400" width="7.300" height="5.300" rx="1.300"/></g>
<path d="M19.800 19.400 L21.300 19.300 M28.600 18.600 L30.200 18" stroke="#3a2a22" stroke-width="1.300" fill="none"/>
<circle cx="16.200" cy="20.400" r=".75" fill="#3b2b25"/><circle cx="24.900" cy="20.200" r=".75" fill="#3b2b25"/>
</g></g>
<circle cx="22.800" cy="22.800" r="22.300" fill="none" stroke="#dfe2f6" stroke-width="1"/>
</svg>
<span style="position:absolute;left:1004.50px;top:943.00px;font-size:19.6px;line-height:1;color:#222a38;white-space:pre;letter-spacing:-0.109px;">@donaltrunk</span>
<svg style="position:absolute;left:1124.4px;top:943.0px" width="20" height="20" viewBox="-1 -1 20 20" fill="none" stroke="#6a6a6a" stroke-width="1.600" stroke-linecap="round" stroke-linejoin="round">
<path d="M0.900 5.400 V2.400 Q0.900 0.900 2.400 0.900 H5.300"/><path d="M12 0.900 H14.900 Q16.400 0.900 16.400 2.400 V5.400"/>
<path d="M0.900 12.300 V15.200 Q0.900 16.700 2.400 16.700 H5.300"/><path d="M12 16.700 H14.900 Q16.400 16.700 16.400 15.200 V12.300"/>
<path d="M0.600 8.900 H16.700"/></svg>
<span style="position:absolute;left:1338.00px;top:944.00px;font-size:19.6px;line-height:1;color:#161616;white-space:pre;letter-spacing:1.087px;">98.3</span>
<span style="position:absolute;left:1545.00px;top:944.00px;font-size:19.6px;line-height:1;color:#161616;white-space:pre;letter-spacing:1.254px;">98.3</span>
<span style="position:absolute;left:1741.25px;top:944.00px;font-size:19.6px;line-height:1;color:#161616;white-space:pre;letter-spacing:1.216px;">98.3k</span>
<div style="position:absolute;left:498px;top:998.2px;width:1407px;height:1px;background:#eeeef2"></div>
<span style="position:absolute;left:510.00px;top:1039.00px;font-size:19.8px;line-height:1;color:#161616;white-space:pre;letter-spacing:0.000px;-webkit-text-stroke:0.7px #161616;">6</span>
<svg style="position:absolute;left:573px;top:1016.0px" width="44" height="58" viewBox="0 0 44 58">
<defs><clipPath id="tc"><rect width="44" height="58" rx="6"/></clipPath><filter id="tb" x="-10%" y="-10%" width="120%" height="120%"><feGaussianBlur stdDeviation="0.55"/></filter></defs>
<g clip-path="url(#tc)"><g filter="url(#tb)">
<rect x="-2" y="-2" width="48" height="62" fill="#15100e"/>
<rect x="29" y="-2" width="17" height="13" fill="#2c1d18"/>
<rect x="6.500" y="12" width="1.400" height="29" fill="#2a1e19"/><rect x="19.500" y="20" width="1.200" height="21" fill="#261b16"/><rect x="-2" y="19.500" width="32" height="1" fill="#221815"/>
<rect x="-2" y="40" width="48" height="20" fill="#8b8c70"/>
<rect x="-2" y="40" width="48" height="2.500" fill="#5b5a44"/>
<path d="M-2 50 Q6 54 12 60 L-2 60Z" fill="#5f4a3a"/>
<path d="M33 60 Q40 53 46 52 L46 60Z" fill="#6b6450"/>
<path d="M33 9.600 Q38 8.600 44.500 9.200 L44.500 45.500 L37.200 46.200 Z" fill="#c8922f"/>
<path d="M35 10.500 L37.200 10.200 L40.400 45.500 L38.600 46 Z" fill="#e3b553"/>
<path d="M40 10 L41.600 10 L43.400 45 L42.200 45Z" fill="#b37c22"/>
<path d="M36.600 32 L44.500 31 L44.500 46 L37.400 46.600 Z" fill="#e6d2a6" opacity=".6"/>
<path d="M15.500 12 L31 14.500 L29 25 L18 23.500 Z" fill="#3f3b39"/>
<path d="M17.500 14 L29.500 16 L28.600 19.500 L17.800 18 Z" fill="#8a857f"/>
<path d="M19 20 L28.400 21.300 L28 23.500 L19.300 22.500 Z" fill="#5f5a56"/>
<path d="M2 -2 L25 -2 Q26.800 2 25.500 4.600 L22.500 9.500 L16.500 12 Q9.500 8.500 2.300 3.600 Z" fill="#b78467"/>
<path d="M5 -2 L19 -2 Q20 2.500 17.500 4.500 Q12.500 6.200 8 3 Z" fill="#dcae94"/>
<path d="M18.500 5.600 Q21.500 3 24.500 4.200 L22 9 Z" fill="#c99a80"/>
<path d="M17 9 L24 8 L25.600 11.600 L19.200 13 Z" fill="#dcb955"/>
<ellipse cx="21.500" cy="49.200" rx="19" ry="7.900" fill="#c04f1d"/>
<ellipse cx="21.500" cy="48.500" rx="18.300" ry="7.100" fill="#d8622a"/>
<ellipse cx="21" cy="47.300" rx="13.500" ry="5.400" fill="#d6d3ac"/>
<ellipse cx="25" cy="46.200" rx="7.500" ry="3.200" fill="#c3c896"/>
<ellipse cx="15" cy="49.900" rx="6" ry="2" fill="#f4efe4"/><ellipse cx="19" cy="45.500" rx="3" ry="1.200" fill="#eeead6"/><ellipse cx="29" cy="48.500" rx="3" ry="1.300" fill="#ece8d2"/>
<ellipse cx="24" cy="51" rx="4" ry="1.500" fill="#f1ece0"/>
<circle cx="3" cy="55.500" r="1" fill="#2a201a"/><circle cx="7" cy="57" r=".9" fill="#2a201a"/><circle cx="39.500" cy="55" r=".9" fill="#3a3026"/>
</g>
<circle cx="21.800" cy="29.400" r="9.400" fill="#4a4b4e" fill-opacity=".8" stroke="#fff" stroke-width="1.500"/>
<path d="M19.600 25.500 L26.100 29.400 L19.600 33.300 Z" fill="#fff"/>
</g></svg>
<span style="position:absolute;left:627.75px;top:1022.00px;font-size:19.4px;line-height:1;color:#161616;white-space:pre;letter-spacing:0.449px;">Live room name Live room...</span>
<span style="position:absolute;left:627.75px;top:1053.00px;font-size:17.0px;line-height:1;color:#7a7a7a;white-space:pre;letter-spacing:0.605px;">ID:17284678980283976</span>
<svg style="position:absolute;left:948.1px;top:1022.1px" width="45.6" height="45.6" viewBox="0 0 45.600 45.600">
<defs><clipPath id="ac"><circle cx="22.800" cy="22.800" r="22.300"/></clipPath><filter id="ab" x="-10%" y="-10%" width="120%" height="120%"><feGaussianBlur stdDeviation="0.420"/></filter>
<pattern id="bk" width="8.400" height="6.600" patternUnits="userSpaceOnUse"><rect width="8.400" height="6.600" fill="#eadfc9"/><rect x=".700" y=".500" width="7.100" height="2.300" fill="#cf8466"/><rect x="-3.500" y="3.800" width="7.100" height="2.300" fill="#d79a7d"/><rect x="4.900" y="3.800" width="7.100" height="2.300" fill="#cb7c5d"/></pattern>
<pattern id="pl" width="5" height="5" patternUnits="userSpaceOnUse" patternTransform="rotate(8)"><rect width="5" height="5" fill="#4a4856"/><rect x="0" y="0" width="2.900" height="2.900" fill="#f4f3f6"/><rect x="2.400" y="0" width="1" height="5" fill="#8c2f34"/><rect x="0" y="2.400" width="5" height="1" fill="#6d2a33"/><rect x="3.400" y="3.400" width="1.600" height="1.600" fill="#d5d3dc"/></pattern></defs>
<g clip-path="url(#ac)"><g filter="url(#ab)">
<rect x="-2" y="-2" width="50" height="50" fill="url(#bk)"/>
<rect x="29" y="-2" width="19" height="50" fill="#f3e8da" opacity=".38"/>
<path d="M16 29 L29.300 28 L29.300 38.500 L16 38.500Z" fill="#d39a78"/>
<path d="M6 47 L8.500 40.500 Q12 36.500 18.600 34.300 L22.300 39.200 L27.600 33.800 Q34 35.500 38.500 39.500 L41 47Z" fill="url(#pl)"/>
<path d="M18.600 34.300 L22.300 39.200 L20 42 L15.500 36.500Z" fill="#4a3f4c"/><path d="M27.600 33.800 L22.300 39.200 L25 42.500 L30.500 35.500Z" fill="#5a2f38"/>
<ellipse cx="12.300" cy="21.800" rx="1.300" ry="2.300" fill="#dba684"/>
<path d="M12.500 17 Q12.300 13.500 16 12.600 L27 12 Q30 13 29.800 18 Q30 25 27.600 29.600 Q24.600 33.700 21.500 33.500 Q17.500 33 14.800 28.500 Q12.700 24 12.500 17Z" fill="#ebbf9f"/>
<path d="M26 14 Q30 14 29.800 19 Q30 25 27.600 29.600 Q25.500 32.700 23.500 33.200 Q26.500 28 26.300 22Z" fill="#d4946c" opacity=".75"/>
<path d="M20.600 20.500 L19.900 25.300 L22.300 25.600" stroke="#cf9777" stroke-width=".8" fill="none"/>
<ellipse cx="21.200" cy="27.900" rx="2.900" ry=".95" fill="#c47f7a"/>
<path d="M12.300 18.400 Q10.400 15 9.200 11.800 Q8.800 8 12.600 5.400 Q17 2 22 1.900 Q27.200 2 29.700 6 Q31.800 10 30.800 14 L30 19 Q29.200 15.500 28 13.400 Q24 12.300 20.500 13.100 Q16 13.800 13.600 12.600 Q12.900 15 12.300 18.400Z" fill="#563a2a"/>
<path d="M11 9.500 Q13.500 4.500 20 3.200 Q25 2.600 27.500 5 Q22 5 18 8 Q14 10.500 11.500 12.500Z" fill="#755039"/>
<path d="M24 6 Q28.500 6.500 30 11 Q30.500 13.500 30 16 Q28.500 11 24 9Z" fill="#442a1c"/>
<g fill="#fff" fill-opacity=".18" stroke="#45332a" stroke-width="1.250"><rect x="12.500" y="17.700" width="7.300" height="5.200" rx="1.300"/><rect x="21.300" y="17.400" width="7.300" height="5.300" rx="1.300"/></g>
<path d="M19.800 19.400 L21.300 19.300 M28.600 18.600 L30.200 18" stroke="#3a2a22" stroke-width="1.300" fill="none"/>
<circle cx="16.200" cy="20.400" r=".75" fill="#3b2b25"/><circle cx="24.900" cy="20.200" r=".75" fill="#3b2b25"/>
</g></g>
<circle cx="22.800" cy="22.800" r="22.300" fill="none" stroke="#dfe2f6" stroke-width="1"/>
</svg>
<span style="position:absolute;left:1004.50px;top:1036.00px;font-size:19.6px;line-height:1;color:#222a38;white-space:pre;letter-spacing:-0.109px;">@donaltrunk</span>
<svg style="position:absolute;left:1124.4px;top:1035.2px" width="20" height="20" viewBox="-1 -1 20 20" fill="none" stroke="#6a6a6a" stroke-width="1.600" stroke-linecap="round" stroke-linejoin="round">
<path d="M0.900 5.400 V2.400 Q0.900 0.900 2.400 0.900 H5.300"/><path d="M12 0.900 H14.900 Q16.400 0.900 16.400 2.400 V5.400"/>
<path d="M0.900 12.300 V15.200 Q0.900 16.700 2.400 16.700 H5.300"/><path d="M12 16.700 H14.900 Q16.400 16.700 16.400 15.200 V12.300"/>
<path d="M0.600 8.900 H16.700"/></svg>
<span style="position:absolute;left:1338.00px;top:1036.00px;font-size:19.6px;line-height:1;color:#161616;white-space:pre;letter-spacing:1.087px;">98.3</span>
<span style="position:absolute;left:1545.00px;top:1036.00px;font-size:19.6px;line-height:1;color:#161616;white-space:pre;letter-spacing:1.254px;">98.3</span>
<span style="position:absolute;left:1741.25px;top:1036.00px;font-size:19.6px;line-height:1;color:#161616;white-space:pre;letter-spacing:1.216px;">98.3k</span>
<div style="position:absolute;left:498px;top:1090.4px;width:1407px;height:1px;background:#eeeef2"></div>
<span style="position:absolute;left:510.00px;top:1132.00px;font-size:19.8px;line-height:1;color:#161616;white-space:pre;letter-spacing:0.000px;-webkit-text-stroke:0.7px #161616;">7</span>
<svg style="position:absolute;left:573px;top:1108.2px" width="44" height="58" viewBox="0 0 44 58">
<defs><clipPath id="tc"><rect width="44" height="58" rx="6"/></clipPath><filter id="tb" x="-10%" y="-10%" width="120%" height="120%"><feGaussianBlur stdDeviation="0.55"/></filter></defs>
<g clip-path="url(#tc)"><g filter="url(#tb)">
<rect x="-2" y="-2" width="48" height="62" fill="#15100e"/>
<rect x="29" y="-2" width="17" height="13" fill="#2c1d18"/>
<rect x="6.500" y="12" width="1.400" height="29" fill="#2a1e19"/><rect x="19.500" y="20" width="1.200" height="21" fill="#261b16"/><rect x="-2" y="19.500" width="32" height="1" fill="#221815"/>
<rect x="-2" y="40" width="48" height="20" fill="#8b8c70"/>
<rect x="-2" y="40" width="48" height="2.500" fill="#5b5a44"/>
<path d="M-2 50 Q6 54 12 60 L-2 60Z" fill="#5f4a3a"/>
<path d="M33 60 Q40 53 46 52 L46 60Z" fill="#6b6450"/>
<path d="M33 9.600 Q38 8.600 44.500 9.200 L44.500 45.500 L37.200 46.200 Z" fill="#c8922f"/>
<path d="M35 10.500 L37.200 10.200 L40.400 45.500 L38.600 46 Z" fill="#e3b553"/>
<path d="M40 10 L41.600 10 L43.400 45 L42.200 45Z" fill="#b37c22"/>
<path d="M36.600 32 L44.500 31 L44.500 46 L37.400 46.600 Z" fill="#e6d2a6" opacity=".6"/>
<path d="M15.500 12 L31 14.500 L29 25 L18 23.500 Z" fill="#3f3b39"/>
<path d="M17.500 14 L29.500 16 L28.600 19.500 L17.800 18 Z" fill="#8a857f"/>
<path d="M19 20 L28.400 21.300 L28 23.500 L19.300 22.500 Z" fill="#5f5a56"/>
<path d="M2 -2 L25 -2 Q26.800 2 25.500 4.600 L22.500 9.500 L16.500 12 Q9.500 8.500 2.300 3.600 Z" fill="#b78467"/>
<path d="M5 -2 L19 -2 Q20 2.500 17.500 4.500 Q12.500 6.200 8 3 Z" fill="#dcae94"/>
<path d="M18.500 5.600 Q21.500 3 24.500 4.200 L22 9 Z" fill="#c99a80"/>
<path d="M17 9 L24 8 L25.600 11.600 L19.200 13 Z" fill="#dcb955"/>
<ellipse cx="21.500" cy="49.200" rx="19" ry="7.900" fill="#c04f1d"/>
<ellipse cx="21.500" cy="48.500" rx="18.300" ry="7.100" fill="#d8622a"/>
<ellipse cx="21" cy="47.300" rx="13.500" ry="5.400" fill="#d6d3ac"/>
<ellipse cx="25" cy="46.200" rx="7.500" ry="3.200" fill="#c3c896"/>
<ellipse cx="15" cy="49.900" rx="6" ry="2" fill="#f4efe4"/><ellipse cx="19" cy="45.500" rx="3" ry="1.200" fill="#eeead6"/><ellipse cx="29" cy="48.500" rx="3" ry="1.300" fill="#ece8d2"/>
<ellipse cx="24" cy="51" rx="4" ry="1.500" fill="#f1ece0"/>
<circle cx="3" cy="55.500" r="1" fill="#2a201a"/><circle cx="7" cy="57" r=".9" fill="#2a201a"/><circle cx="39.500" cy="55" r=".9" fill="#3a3026"/>
</g>
<circle cx="21.800" cy="29.400" r="9.400" fill="#4a4b4e" fill-opacity=".8" stroke="#fff" stroke-width="1.500"/>
<path d="M19.600 25.500 L26.100 29.400 L19.600 33.300 Z" fill="#fff"/>
</g></svg>
<span style="position:absolute;left:627.75px;top:1114.00px;font-size:19.4px;line-height:1;color:#161616;white-space:pre;letter-spacing:0.449px;">Live room name Live room...</span>
<span style="position:absolute;left:627.75px;top:1145.00px;font-size:17.0px;line-height:1;color:#7a7a7a;white-space:pre;letter-spacing:0.605px;">ID:17284678980283976</span>
<svg style="position:absolute;left:948.1px;top:1114.3px" width="45.6" height="45.6" viewBox="0 0 45.600 45.600">
<defs><clipPath id="ac"><circle cx="22.800" cy="22.800" r="22.300"/></clipPath><filter id="ab" x="-10%" y="-10%" width="120%" height="120%"><feGaussianBlur stdDeviation="0.420"/></filter>
<pattern id="bk" width="8.400" height="6.600" patternUnits="userSpaceOnUse"><rect width="8.400" height="6.600" fill="#eadfc9"/><rect x=".700" y=".500" width="7.100" height="2.300" fill="#cf8466"/><rect x="-3.500" y="3.800" width="7.100" height="2.300" fill="#d79a7d"/><rect x="4.900" y="3.800" width="7.100" height="2.300" fill="#cb7c5d"/></pattern>
<pattern id="pl" width="5" height="5" patternUnits="userSpaceOnUse" patternTransform="rotate(8)"><rect width="5" height="5" fill="#4a4856"/><rect x="0" y="0" width="2.900" height="2.900" fill="#f4f3f6"/><rect x="2.400" y="0" width="1" height="5" fill="#8c2f34"/><rect x="0" y="2.400" width="5" height="1" fill="#6d2a33"/><rect x="3.400" y="3.400" width="1.600" height="1.600" fill="#d5d3dc"/></pattern></defs>
<g clip-path="url(#ac)"><g filter="url(#ab)">
<rect x="-2" y="-2" width="50" height="50" fill="url(#bk)"/>
<rect x="29" y="-2" width="19" height="50" fill="#f3e8da" opacity=".38"/>
<path d="M16 29 L29.300 28 L29.300 38.500 L16 38.500Z" fill="#d39a78"/>
<path d="M6 47 L8.500 40.500 Q12 36.500 18.600 34.300 L22.300 39.200 L27.600 33.800 Q34 35.500 38.500 39.500 L41 47Z" fill="url(#pl)"/>
<path d="M18.600 34.300 L22.300 39.200 L20 42 L15.500 36.500Z" fill="#4a3f4c"/><path d="M27.600 33.800 L22.300 39.200 L25 42.500 L30.500 35.500Z" fill="#5a2f38"/>
<ellipse cx="12.300" cy="21.800" rx="1.300" ry="2.300" fill="#dba684"/>
<path d="M12.500 17 Q12.300 13.500 16 12.600 L27 12 Q30 13 29.800 18 Q30 25 27.600 29.600 Q24.600 33.700 21.500 33.500 Q17.500 33 14.800 28.500 Q12.700 24 12.500 17Z" fill="#ebbf9f"/>
<path d="M26 14 Q30 14 29.800 19 Q30 25 27.600 29.600 Q25.500 32.700 23.500 33.200 Q26.500 28 26.300 22Z" fill="#d4946c" opacity=".75"/>
<path d="M20.600 20.500 L19.900 25.300 L22.300 25.600" stroke="#cf9777" stroke-width=".8" fill="none"/>
<ellipse cx="21.200" cy="27.900" rx="2.900" ry=".95" fill="#c47f7a"/>
<path d="M12.300 18.400 Q10.400 15 9.200 11.800 Q8.800 8 12.600 5.400 Q17 2 22 1.900 Q27.200 2 29.700 6 Q31.800 10 30.800 14 L30 19 Q29.200 15.500 28 13.400 Q24 12.300 20.500 13.100 Q16 13.800 13.600 12.600 Q12.900 15 12.300 18.400Z" fill="#563a2a"/>
<path d="M11 9.500 Q13.500 4.500 20 3.200 Q25 2.600 27.500 5 Q22 5 18 8 Q14 10.500 11.500 12.500Z" fill="#755039"/>
<path d="M24 6 Q28.500 6.500 30 11 Q30.500 13.500 30 16 Q28.500 11 24 9Z" fill="#442a1c"/>
<g fill="#fff" fill-opacity=".18" stroke="#45332a" stroke-width="1.250"><rect x="12.500" y="17.700" width="7.300" height="5.200" rx="1.300"/><rect x="21.300" y="17.400" width="7.300" height="5.300" rx="1.300"/></g>
<path d="M19.800 19.400 L21.300 19.300 M28.600 18.600 L30.200 18" stroke="#3a2a22" stroke-width="1.300" fill="none"/>
<circle cx="16.200" cy="20.400" r=".75" fill="#3b2b25"/><circle cx="24.900" cy="20.200" r=".75" fill="#3b2b25"/>
</g></g>
<circle cx="22.800" cy="22.800" r="22.300" fill="none" stroke="#dfe2f6" stroke-width="1"/>
</svg>
<span style="position:absolute;left:1004.50px;top:1128.00px;font-size:19.6px;line-height:1;color:#222a38;white-space:pre;letter-spacing:-0.109px;">@donaltrunk</span>
<svg style="position:absolute;left:1124.4px;top:1127.4px" width="20" height="20" viewBox="-1 -1 20 20" fill="none" stroke="#6a6a6a" stroke-width="1.600" stroke-linecap="round" stroke-linejoin="round">
<path d="M0.900 5.400 V2.400 Q0.900 0.900 2.400 0.900 H5.300"/><path d="M12 0.900 H14.900 Q16.400 0.900 16.400 2.400 V5.400"/>
<path d="M0.900 12.300 V15.200 Q0.900 16.700 2.400 16.700 H5.300"/><path d="M12 16.700 H14.900 Q16.400 16.700 16.400 15.200 V12.300"/>
<path d="M0.600 8.900 H16.700"/></svg>
<span style="position:absolute;left:1338.00px;top:1128.00px;font-size:19.6px;line-height:1;color:#161616;white-space:pre;letter-spacing:1.087px;">98.3</span>
<span style="position:absolute;left:1545.00px;top:1128.00px;font-size:19.6px;line-height:1;color:#161616;white-space:pre;letter-spacing:1.254px;">98.3</span>
<span style="position:absolute;left:1741.25px;top:1128.00px;font-size:19.6px;line-height:1;color:#161616;white-space:pre;letter-spacing:1.216px;">98.3k</span>
<div style="position:absolute;left:498px;top:1182.6px;width:1407px;height:1px;background:#eeeef2"></div>
<span style="position:absolute;left:511.00px;top:1224.00px;font-size:19.8px;line-height:1;color:#161616;white-space:pre;letter-spacing:0.000px;-webkit-text-stroke:0.7px #161616;">8</span>
<svg style="position:absolute;left:573px;top:1200.4px" width="44" height="58" viewBox="0 0 44 58">
<defs><clipPath id="tc"><rect width="44" height="58" rx="6"/></clipPath><filter id="tb" x="-10%" y="-10%" width="120%" height="120%"><feGaussianBlur stdDeviation="0.55"/></filter></defs>
<g clip-path="url(#tc)"><g filter="url(#tb)">
<rect x="-2" y="-2" width="48" height="62" fill="#15100e"/>
<rect x="29" y="-2" width="17" height="13" fill="#2c1d18"/>
<rect x="6.500" y="12" width="1.400" height="29" fill="#2a1e19"/><rect x="19.500" y="20" width="1.200" height="21" fill="#261b16"/><rect x="-2" y="19.500" width="32" height="1" fill="#221815"/>
<rect x="-2" y="40" width="48" height="20" fill="#8b8c70"/>
<rect x="-2" y="40" width="48" height="2.500" fill="#5b5a44"/>
<path d="M-2 50 Q6 54 12 60 L-2 60Z" fill="#5f4a3a"/>
<path d="M33 60 Q40 53 46 52 L46 60Z" fill="#6b6450"/>
<path d="M33 9.600 Q38 8.600 44.500 9.200 L44.500 45.500 L37.200 46.200 Z" fill="#c8922f"/>
<path d="M35 10.500 L37.200 10.200 L40.400 45.500 L38.600 46 Z" fill="#e3b553"/>
<path d="M40 10 L41.600 10 L43.400 45 L42.200 45Z" fill="#b37c22"/>
<path d="M36.600 32 L44.500 31 L44.500 46 L37.400 46.600 Z" fill="#e6d2a6" opacity=".6"/>
<path d="M15.500 12 L31 14.500 L29 25 L18 23.500 Z" fill="#3f3b39"/>
<path d="M17.500 14 L29.500 16 L28.600 19.500 L17.800 18 Z" fill="#8a857f"/>
<path d="M19 20 L28.400 21.300 L28 23.500 L19.300 22.500 Z" fill="#5f5a56"/>
<path d="M2 -2 L25 -2 Q26.800 2 25.500 4.600 L22.500 9.500 L16.500 12 Q9.500 8.500 2.300 3.600 Z" fill="#b78467"/>
<path d="M5 -2 L19 -2 Q20 2.500 17.500 4.500 Q12.500 6.200 8 3 Z" fill="#dcae94"/>
<path d="M18.500 5.600 Q21.500 3 24.500 4.200 L22 9 Z" fill="#c99a80"/>
<path d="M17 9 L24 8 L25.600 11.600 L19.200 13 Z" fill="#dcb955"/>
<ellipse cx="21.500" cy="49.200" rx="19" ry="7.900" fill="#c04f1d"/>
<ellipse cx="21.500" cy="48.500" rx="18.300" ry="7.100" fill="#d8622a"/>
<ellipse cx="21" cy="47.300" rx="13.500" ry="5.400" fill="#d6d3ac"/>
<ellipse cx="25" cy="46.200" rx="7.500" ry="3.200" fill="#c3c896"/>
<ellipse cx="15" cy="49.900" rx="6" ry="2" fill="#f4efe4"/><ellipse cx="19" cy="45.500" rx="3" ry="1.200" fill="#eeead6"/><ellipse cx="29" cy="48.500" rx="3" ry="1.300" fill="#ece8d2"/>
<ellipse cx="24" cy="51" rx="4" ry="1.500" fill="#f1ece0"/>
<circle cx="3" cy="55.500" r="1" fill="#2a201a"/><circle cx="7" cy="57" r=".9" fill="#2a201a"/><circle cx="39.500" cy="55" r=".9" fill="#3a3026"/>
</g>
<circle cx="21.800" cy="29.400" r="9.400" fill="#4a4b4e" fill-opacity=".8" stroke="#fff" stroke-width="1.500"/>
<path d="M19.600 25.500 L26.100 29.400 L19.600 33.300 Z" fill="#fff"/>
</g></svg>
<span style="position:absolute;left:627.75px;top:1206.00px;font-size:19.4px;line-height:1;color:#161616;white-space:pre;letter-spacing:0.449px;">Live room name Live room...</span>
<span style="position:absolute;left:627.75px;top:1237.00px;font-size:17.0px;line-height:1;color:#7a7a7a;white-space:pre;letter-spacing:0.605px;">ID:17284678980283976</span>
<svg style="position:absolute;left:948.1px;top:1206.5px" width="45.6" height="45.6" viewBox="0 0 45.600 45.600">
<defs><clipPath id="ac"><circle cx="22.800" cy="22.800" r="22.300"/></clipPath><filter id="ab" x="-10%" y="-10%" width="120%" height="120%"><feGaussianBlur stdDeviation="0.420"/></filter>
<pattern id="bk" width="8.400" height="6.600" patternUnits="userSpaceOnUse"><rect width="8.400" height="6.600" fill="#eadfc9"/><rect x=".700" y=".500" width="7.100" height="2.300" fill="#cf8466"/><rect x="-3.500" y="3.800" width="7.100" height="2.300" fill="#d79a7d"/><rect x="4.900" y="3.800" width="7.100" height="2.300" fill="#cb7c5d"/></pattern>
<pattern id="pl" width="5" height="5" patternUnits="userSpaceOnUse" patternTransform="rotate(8)"><rect width="5" height="5" fill="#4a4856"/><rect x="0" y="0" width="2.900" height="2.900" fill="#f4f3f6"/><rect x="2.400" y="0" width="1" height="5" fill="#8c2f34"/><rect x="0" y="2.400" width="5" height="1" fill="#6d2a33"/><rect x="3.400" y="3.400" width="1.600" height="1.600" fill="#d5d3dc"/></pattern></defs>
<g clip-path="url(#ac)"><g filter="url(#ab)">
<rect x="-2" y="-2" width="50" height="50" fill="url(#bk)"/>
<rect x="29" y="-2" width="19" height="50" fill="#f3e8da" opacity=".38"/>
<path d="M16 29 L29.300 28 L29.300 38.500 L16 38.500Z" fill="#d39a78"/>
<path d="M6 47 L8.500 40.500 Q12 36.500 18.600 34.300 L22.300 39.200 L27.600 33.800 Q34 35.500 38.500 39.500 L41 47Z" fill="url(#pl)"/>
<path d="M18.600 34.300 L22.300 39.200 L20 42 L15.500 36.500Z" fill="#4a3f4c"/><path d="M27.600 33.800 L22.300 39.200 L25 42.500 L30.500 35.500Z" fill="#5a2f38"/>
<ellipse cx="12.300" cy="21.800" rx="1.300" ry="2.300" fill="#dba684"/>
<path d="M12.500 17 Q12.300 13.500 16 12.600 L27 12 Q30 13 29.800 18 Q30 25 27.600 29.600 Q24.600 33.700 21.500 33.500 Q17.500 33 14.800 28.500 Q12.700 24 12.500 17Z" fill="#ebbf9f"/>
<path d="M26 14 Q30 14 29.800 19 Q30 25 27.600 29.600 Q25.500 32.700 23.500 33.200 Q26.500 28 26.300 22Z" fill="#d4946c" opacity=".75"/>
<path d="M20.600 20.500 L19.900 25.300 L22.300 25.600" stroke="#cf9777" stroke-width=".8" fill="none"/>
<ellipse cx="21.200" cy="27.900" rx="2.900" ry=".95" fill="#c47f7a"/>
<path d="M12.300 18.400 Q10.400 15 9.200 11.800 Q8.800 8 12.600 5.400 Q17 2 22 1.900 Q27.200 2 29.700 6 Q31.800 10 30.800 14 L30 19 Q29.200 15.500 28 13.400 Q24 12.300 20.500 13.100 Q16 13.800 13.600 12.600 Q12.900 15 12.300 18.400Z" fill="#563a2a"/>
<path d="M11 9.500 Q13.500 4.500 20 3.200 Q25 2.600 27.500 5 Q22 5 18 8 Q14 10.500 11.500 12.500Z" fill="#755039"/>
<path d="M24 6 Q28.500 6.500 30 11 Q30.500 13.500 30 16 Q28.500 11 24 9Z" fill="#442a1c"/>
<g fill="#fff" fill-opacity=".18" stroke="#45332a" stroke-width="1.250"><rect x="12.500" y="17.700" width="7.300" height="5.200" rx="1.300"/><rect x="21.300" y="17.400" width="7.300" height="5.300" rx="1.300"/></g>
<path d="M19.800 19.400 L21.300 19.300 M28.600 18.600 L30.200 18" stroke="#3a2a22" stroke-width="1.300" fill="none"/>
<circle cx="16.200" cy="20.400" r=".75" fill="#3b2b25"/><circle cx="24.900" cy="20.200" r=".75" fill="#3b2b25"/>
</g></g>
<circle cx="22.800" cy="22.800" r="22.300" fill="none" stroke="#dfe2f6" stroke-width="1"/>
</svg>
<span style="position:absolute;left:1004.50px;top:1220.00px;font-size:19.6px;line-height:1;color:#222a38;white-space:pre;letter-spacing:-0.109px;">@donaltrunk</span>
<svg style="position:absolute;left:1124.4px;top:1219.6px" width="20" height="20" viewBox="-1 -1 20 20" fill="none" stroke="#6a6a6a" stroke-width="1.600" stroke-linecap="round" stroke-linejoin="round">
<path d="M0.900 5.400 V2.400 Q0.900 0.900 2.400 0.900 H5.300"/><path d="M12 0.900 H14.900 Q16.400 0.900 16.400 2.400 V5.400"/>
<path d="M0.900 12.300 V15.200 Q0.900 16.700 2.400 16.700 H5.300"/><path d="M12 16.700 H14.900 Q16.400 16.700 16.400 15.200 V12.300"/>
<path d="M0.600 8.900 H16.700"/></svg>
<span style="position:absolute;left:1338.00px;top:1221.00px;font-size:19.6px;line-height:1;color:#161616;white-space:pre;letter-spacing:1.087px;">98.3</span>
<span style="position:absolute;left:1545.00px;top:1221.00px;font-size:19.6px;line-height:1;color:#161616;white-space:pre;letter-spacing:1.254px;">98.3</span>
<span style="position:absolute;left:1741.25px;top:1221.00px;font-size:19.6px;line-height:1;color:#161616;white-space:pre;letter-spacing:1.216px;">98.3k</span>
<div style="position:absolute;left:498px;top:1274.8px;width:1407px;height:1px;background:#eeeef2"></div>
<span style="position:absolute;left:511.00px;top:1316.00px;font-size:19.8px;line-height:1;color:#161616;white-space:pre;letter-spacing:0.000px;-webkit-text-stroke:0.7px #161616;">9</span>
<svg style="position:absolute;left:573px;top:1292.6px" width="44" height="58" viewBox="0 0 44 58">
<defs><clipPath id="tc"><rect width="44" height="58" rx="6"/></clipPath><filter id="tb" x="-10%" y="-10%" width="120%" height="120%"><feGaussianBlur stdDeviation="0.55"/></filter></defs>
<g clip-path="url(#tc)"><g filter="url(#tb)">
<rect x="-2" y="-2" width="48" height="62" fill="#15100e"/>
<rect x="29" y="-2" width="17" height="13" fill="#2c1d18"/>
<rect x="6.500" y="12" width="1.400" height="29" fill="#2a1e19"/><rect x="19.500" y="20" width="1.200" height="21" fill="#261b16"/><rect x="-2" y="19.500" width="32" height="1" fill="#221815"/>
<rect x="-2" y="40" width="48" height="20" fill="#8b8c70"/>
<rect x="-2" y="40" width="48" height="2.500" fill="#5b5a44"/>
<path d="M-2 50 Q6 54 12 60 L-2 60Z" fill="#5f4a3a"/>
<path d="M33 60 Q40 53 46 52 L46 60Z" fill="#6b6450"/>
<path d="M33 9.600 Q38 8.600 44.500 9.200 L44.500 45.500 L37.200 46.200 Z" fill="#c8922f"/>
<path d="M35 10.500 L37.200 10.200 L40.400 45.500 L38.600 46 Z" fill="#e3b553"/>
<path d="M40 10 L41.600 10 L43.400 45 L42.200 45Z" fill="#b37c22"/>
<path d="M36.600 32 L44.500 31 L44.500 46 L37.400 46.600 Z" fill="#e6d2a6" opacity=".6"/>
<path d="M15.500 12 L31 14.500 L29 25 L18 23.500 Z" fill="#3f3b39"/>
<path d="M17.500 14 L29.500 16 L28.600 19.500 L17.800 18 Z" fill="#8a857f"/>
<path d="M19 20 L28.400 21.300 L28 23.500 L19.300 22.500 Z" fill="#5f5a56"/>
<path d="M2 -2 L25 -2 Q26.800 2 25.500 4.600 L22.500 9.500 L16.500 12 Q9.500 8.500 2.300 3.600 Z" fill="#b78467"/>
<path d="M5 -2 L19 -2 Q20 2.500 17.500 4.500 Q12.500 6.200 8 3 Z" fill="#dcae94"/>
<path d="M18.500 5.600 Q21.500 3 24.500 4.200 L22 9 Z" fill="#c99a80"/>
<path d="M17 9 L24 8 L25.600 11.600 L19.200 13 Z" fill="#dcb955"/>
<ellipse cx="21.500" cy="49.200" rx="19" ry="7.900" fill="#c04f1d"/>
<ellipse cx="21.500" cy="48.500" rx="18.300" ry="7.100" fill="#d8622a"/>
<ellipse cx="21" cy="47.300" rx="13.500" ry="5.400" fill="#d6d3ac"/>
<ellipse cx="25" cy="46.200" rx="7.500" ry="3.200" fill="#c3c896"/>
<ellipse cx="15" cy="49.900" rx="6" ry="2" fill="#f4efe4"/><ellipse cx="19" cy="45.500" rx="3" ry="1.200" fill="#eeead6"/><ellipse cx="29" cy="48.500" rx="3" ry="1.300" fill="#ece8d2"/>
<ellipse cx="24" cy="51" rx="4" ry="1.500" fill="#f1ece0"/>
<circle cx="3" cy="55.500" r="1" fill="#2a201a"/><circle cx="7" cy="57" r=".9" fill="#2a201a"/><circle cx="39.500" cy="55" r=".9" fill="#3a3026"/>
</g>
<circle cx="21.800" cy="29.400" r="9.400" fill="#4a4b4e" fill-opacity=".8" stroke="#fff" stroke-width="1.500"/>
<path d="M19.600 25.500 L26.100 29.400 L19.600 33.300 Z" fill="#fff"/>
</g></svg>
<span style="position:absolute;left:627.75px;top:1299.00px;font-size:19.4px;line-height:1;color:#161616;white-space:pre;letter-spacing:0.449px;">Live room name Live room...</span>
<span style="position:absolute;left:627.75px;top:1329.00px;font-size:17.0px;line-height:1;color:#7a7a7a;white-space:pre;letter-spacing:0.605px;">ID:17284678980283976</span>
<svg style="position:absolute;left:948.1px;top:1298.7px" width="45.6" height="45.6" viewBox="0 0 45.600 45.600">
<defs><clipPath id="ac"><circle cx="22.800" cy="22.800" r="22.300"/></clipPath><filter id="ab" x="-10%" y="-10%" width="120%" height="120%"><feGaussianBlur stdDeviation="0.420"/></filter>
<pattern id="bk" width="8.400" height="6.600" patternUnits="userSpaceOnUse"><rect width="8.400" height="6.600" fill="#eadfc9"/><rect x=".700" y=".500" width="7.100" height="2.300" fill="#cf8466"/><rect x="-3.500" y="3.800" width="7.100" height="2.300" fill="#d79a7d"/><rect x="4.900" y="3.800" width="7.100" height="2.300" fill="#cb7c5d"/></pattern>
<pattern id="pl" width="5" height="5" patternUnits="userSpaceOnUse" patternTransform="rotate(8)"><rect width="5" height="5" fill="#4a4856"/><rect x="0" y="0" width="2.900" height="2.900" fill="#f4f3f6"/><rect x="2.400" y="0" width="1" height="5" fill="#8c2f34"/><rect x="0" y="2.400" width="5" height="1" fill="#6d2a33"/><rect x="3.400" y="3.400" width="1.600" height="1.600" fill="#d5d3dc"/></pattern></defs>
<g clip-path="url(#ac)"><g filter="url(#ab)">
<rect x="-2" y="-2" width="50" height="50" fill="url(#bk)"/>
<rect x="29" y="-2" width="19" height="50" fill="#f3e8da" opacity=".38"/>
<path d="M16 29 L29.300 28 L29.300 38.500 L16 38.500Z" fill="#d39a78"/>
<path d="M6 47 L8.500 40.500 Q12 36.500 18.600 34.300 L22.300 39.200 L27.600 33.800 Q34 35.500 38.500 39.500 L41 47Z" fill="url(#pl)"/>
<path d="M18.600 34.300 L22.300 39.200 L20 42 L15.500 36.500Z" fill="#4a3f4c"/><path d="M27.600 33.800 L22.300 39.200 L25 42.500 L30.500 35.500Z" fill="#5a2f38"/>
<ellipse cx="12.300" cy="21.800" rx="1.300" ry="2.300" fill="#dba684"/>
<path d="M12.500 17 Q12.300 13.500 16 12.600 L27 12 Q30 13 29.800 18 Q30 25 27.600 29.600 Q24.600 33.700 21.500 33.500 Q17.500 33 14.800 28.500 Q12.700 24 12.500 17Z" fill="#ebbf9f"/>
<path d="M26 14 Q30 14 29.800 19 Q30 25 27.600 29.600 Q25.500 32.700 23.500 33.200 Q26.500 28 26.300 22Z" fill="#d4946c" opacity=".75"/>
<path d="M20.600 20.500 L19.900 25.300 L22.300 25.600" stroke="#cf9777" stroke-width=".8" fill="none"/>
<ellipse cx="21.200" cy="27.900" rx="2.900" ry=".95" fill="#c47f7a"/>
<path d="M12.300 18.400 Q10.400 15 9.200 11.800 Q8.800 8 12.600 5.400 Q17 2 22 1.900 Q27.200 2 29.700 6 Q31.800 10 30.800 14 L30 19 Q29.200 15.500 28 13.400 Q24 12.300 20.500 13.100 Q16 13.800 13.600 12.600 Q12.900 15 12.300 18.400Z" fill="#563a2a"/>
<path d="M11 9.500 Q13.500 4.500 20 3.200 Q25 2.600 27.500 5 Q22 5 18 8 Q14 10.500 11.500 12.500Z" fill="#755039"/>
<path d="M24 6 Q28.500 6.500 30 11 Q30.500 13.500 30 16 Q28.500 11 24 9Z" fill="#442a1c"/>
<g fill="#fff" fill-opacity=".18" stroke="#45332a" stroke-width="1.250"><rect x="12.500" y="17.700" width="7.300" height="5.200" rx="1.300"/><rect x="21.300" y="17.400" width="7.300" height="5.300" rx="1.300"/></g>
<path d="M19.800 19.400 L21.300 19.300 M28.600 18.600 L30.200 18" stroke="#3a2a22" stroke-width="1.300" fill="none"/>
<circle cx="16.200" cy="20.400" r=".75" fill="#3b2b25"/><circle cx="24.900" cy="20.200" r=".75" fill="#3b2b25"/>
</g></g>
<circle cx="22.800" cy="22.800" r="22.300" fill="none" stroke="#dfe2f6" stroke-width="1"/>
</svg>
<span style="position:absolute;left:1004.50px;top:1312.00px;font-size:19.6px;line-height:1;color:#222a38;white-space:pre;letter-spacing:-0.109px;">@donaltrunk</span>
<svg style="position:absolute;left:1124.4px;top:1311.8px" width="20" height="20" viewBox="-1 -1 20 20" fill="none" stroke="#6a6a6a" stroke-width="1.600" stroke-linecap="round" stroke-linejoin="round">
<path d="M0.900 5.400 V2.400 Q0.900 0.900 2.400 0.900 H5.300"/><path d="M12 0.900 H14.900 Q16.400 0.900 16.400 2.400 V5.400"/>
<path d="M0.900 12.300 V15.200 Q0.900 16.700 2.400 16.700 H5.300"/><path d="M12 16.700 H14.900 Q16.400 16.700 16.400 15.200 V12.300"/>
<path d="M0.600 8.900 H16.700"/></svg>
<span style="position:absolute;left:1338.00px;top:1313.00px;font-size:19.6px;line-height:1;color:#161616;white-space:pre;letter-spacing:1.087px;">98.3</span>
<span style="position:absolute;left:1545.00px;top:1313.00px;font-size:19.6px;line-height:1;color:#161616;white-space:pre;letter-spacing:1.254px;">98.3</span>
<span style="position:absolute;left:1741.25px;top:1313.00px;font-size:19.6px;line-height:1;color:#161616;white-space:pre;letter-spacing:1.216px;">98.3k</span>
<div style="position:absolute;left:498px;top:1367.0px;width:1407px;height:1px;background:#eeeef2"></div>
<span style="position:absolute;left:505.40px;top:1408.00px;font-size:19.8px;line-height:1;color:#161616;white-space:pre;letter-spacing:0.199px;-webkit-text-stroke:0.7px #161616;">10</span>
<svg style="position:absolute;left:573px;top:1384.8px" width="44" height="58" viewBox="0 0 44 58">
<defs><clipPath id="tc"><rect width="44" height="58" rx="6"/></clipPath><filter id="tb" x="-10%" y="-10%" width="120%" height="120%"><feGaussianBlur stdDeviation="0.55"/></filter></defs>
<g clip-path="url(#tc)"><g filter="url(#tb)">
<rect x="-2" y="-2" width="48" height="62" fill="#15100e"/>
<rect x="29" y="-2" width="17" height="13" fill="#2c1d18"/>
<rect x="6.500" y="12" width="1.400" height="29" fill="#2a1e19"/><rect x="19.500" y="20" width="1.200" height="21" fill="#261b16"/><rect x="-2" y="19.500" width="32" height="1" fill="#221815"/>
<rect x="-2" y="40" width="48" height="20" fill="#8b8c70"/>
<rect x="-2" y="40" width="48" height="2.500" fill="#5b5a44"/>
<path d="M-2 50 Q6 54 12 60 L-2 60Z" fill="#5f4a3a"/>
<path d="M33 60 Q40 53 46 52 L46 60Z" fill="#6b6450"/>
<path d="M33 9.600 Q38 8.600 44.500 9.200 L44.500 45.500 L37.200 46.200 Z" fill="#c8922f"/>
<path d="M35 10.500 L37.200 10.200 L40.400 45.500 L38.600 46 Z" fill="#e3b553"/>
<path d="M40 10 L41.600 10 L43.400 45 L42.200 45Z" fill="#b37c22"/>
<path d="M36.600 32 L44.500 31 L44.500 46 L37.400 46.600 Z" fill="#e6d2a6" opacity=".6"/>
<path d="M15.500 12 L31 14.500 L29 25 L18 23.500 Z" fill="#3f3b39"/>
<path d="M17.500 14 L29.500 16 L28.600 19.500 L17.800 18 Z" fill="#8a857f"/>
<path d="M19 20 L28.400 21.300 L28 23.500 L19.300 22.500 Z" fill="#5f5a56"/>
<path d="M2 -2 L25 -2 Q26.800 2 25.500 4.600 L22.500 9.500 L16.500 12 Q9.500 8.500 2.300 3.600 Z" fill="#b78467"/>
<path d="M5 -2 L19 -2 Q20 2.500 17.500 4.500 Q12.500 6.200 8 3 Z" fill="#dcae94"/>
<path d="M18.500 5.600 Q21.500 3 24.500 4.200 L22 9 Z" fill="#c99a80"/>
<path d="M17 9 L24 8 L25.600 11.600 L19.200 13 Z" fill="#dcb955"/>
<ellipse cx="21.500" cy="49.200" rx="19" ry="7.900" fill="#c04f1d"/>
<ellipse cx="21.500" cy="48.500" rx="18.300" ry="7.100" fill="#d8622a"/>
<ellipse cx="21" cy="47.300" rx="13.500" ry="5.400" fill="#d6d3ac"/>
<ellipse cx="25" cy="46.200" rx="7.500" ry="3.200" fill="#c3c896"/>
<ellipse cx="15" cy="49.900" rx="6" ry="2" fill="#f4efe4"/><ellipse cx="19" cy="45.500" rx="3" ry="1.200" fill="#eeead6"/><ellipse cx="29" cy="48.500" rx="3" ry="1.300" fill="#ece8d2"/>
<ellipse cx="24" cy="51" rx="4" ry="1.500" fill="#f1ece0"/>
<circle cx="3" cy="55.500" r="1" fill="#2a201a"/><circle cx="7" cy="57" r=".9" fill="#2a201a"/><circle cx="39.500" cy="55" r=".9" fill="#3a3026"/>
</g>
<circle cx="21.800" cy="29.400" r="9.400" fill="#4a4b4e" fill-opacity=".8" stroke="#fff" stroke-width="1.500"/>
<path d="M19.600 25.500 L26.100 29.400 L19.600 33.300 Z" fill="#fff"/>
</g></svg>
<span style="position:absolute;left:627.75px;top:1391.00px;font-size:19.4px;line-height:1;color:#161616;white-space:pre;letter-spacing:0.449px;">Live room name Live room...</span>
<span style="position:absolute;left:627.75px;top:1422.00px;font-size:17.0px;line-height:1;color:#7a7a7a;white-space:pre;letter-spacing:0.605px;">ID:17284678980283976</span>
<svg style="position:absolute;left:948.1px;top:1390.9px" width="45.6" height="45.6" viewBox="0 0 45.600 45.600">
<defs><clipPath id="ac"><circle cx="22.800" cy="22.800" r="22.300"/></clipPath><filter id="ab" x="-10%" y="-10%" width="120%" height="120%"><feGaussianBlur stdDeviation="0.420"/></filter>
<pattern id="bk" width="8.400" height="6.600" patternUnits="userSpaceOnUse"><rect width="8.400" height="6.600" fill="#eadfc9"/><rect x=".700" y=".500" width="7.100" height="2.300" fill="#cf8466"/><rect x="-3.500" y="3.800" width="7.100" height="2.300" fill="#d79a7d"/><rect x="4.900" y="3.800" width="7.100" height="2.300" fill="#cb7c5d"/></pattern>
<pattern id="pl" width="5" height="5" patternUnits="userSpaceOnUse" patternTransform="rotate(8)"><rect width="5" height="5" fill="#4a4856"/><rect x="0" y="0" width="2.900" height="2.900" fill="#f4f3f6"/><rect x="2.400" y="0" width="1" height="5" fill="#8c2f34"/><rect x="0" y="2.400" width="5" height="1" fill="#6d2a33"/><rect x="3.400" y="3.400" width="1.600" height="1.600" fill="#d5d3dc"/></pattern></defs>
<g clip-path="url(#ac)"><g filter="url(#ab)">
<rect x="-2" y="-2" width="50" height="50" fill="url(#bk)"/>
<rect x="29" y="-2" width="19" height="50" fill="#f3e8da" opacity=".38"/>
<path d="M16 29 L29.300 28 L29.300 38.500 L16 38.500Z" fill="#d39a78"/>
<path d="M6 47 L8.500 40.500 Q12 36.500 18.600 34.300 L22.300 39.200 L27.600 33.800 Q34 35.500 38.500 39.500 L41 47Z" fill="url(#pl)"/>
<path d="M18.600 34.300 L22.300 39.200 L20 42 L15.500 36.500Z" fill="#4a3f4c"/><path d="M27.600 33.800 L22.300 39.200 L25 42.500 L30.500 35.500Z" fill="#5a2f38"/>
<ellipse cx="12.300" cy="21.800" rx="1.300" ry="2.300" fill="#dba684"/>
<path d="M12.500 17 Q12.300 13.500 16 12.600 L27 12 Q30 13 29.800 18 Q30 25 27.600 29.600 Q24.600 33.700 21.500 33.500 Q17.500 33 14.800 28.500 Q12.700 24 12.500 17Z" fill="#ebbf9f"/>
<path d="M26 14 Q30 14 29.800 19 Q30 25 27.600 29.600 Q25.500 32.700 23.500 33.200 Q26.500 28 26.300 22Z" fill="#d4946c" opacity=".75"/>
<path d="M20.600 20.500 L19.900 25.300 L22.300 25.600" stroke="#cf9777" stroke-width=".8" fill="none"/>
<ellipse cx="21.200" cy="27.900" rx="2.900" ry=".95" fill="#c47f7a"/>
<path d="M12.300 18.400 Q10.400 15 9.200 11.800 Q8.800 8 12.600 5.400 Q17 2 22 1.900 Q27.200 2 29.700 6 Q31.800 10 30.800 14 L30 19 Q29.200 15.500 28 13.400 Q24 12.300 20.500 13.100 Q16 13.800 13.600 12.600 Q12.900 15 12.300 18.400Z" fill="#563a2a"/>
<path d="M11 9.500 Q13.500 4.500 20 3.200 Q25 2.600 27.500 5 Q22 5 18 8 Q14 10.500 11.500 12.500Z" fill="#755039"/>
<path d="M24 6 Q28.500 6.500 30 11 Q30.500 13.500 30 16 Q28.500 11 24 9Z" fill="#442a1c"/>
<g fill="#fff" fill-opacity=".18" stroke="#45332a" stroke-width="1.250"><rect x="12.500" y="17.700" width="7.300" height="5.200" rx="1.300"/><rect x="21.300" y="17.400" width="7.300" height="5.300" rx="1.300"/></g>
<path d="M19.800 19.400 L21.300 19.300 M28.600 18.600 L30.200 18" stroke="#3a2a22" stroke-width="1.300" fill="none"/>
<circle cx="16.200" cy="20.400" r=".75" fill="#3b2b25"/><circle cx="24.900" cy="20.200" r=".75" fill="#3b2b25"/>
</g></g>
<circle cx="22.800" cy="22.800" r="22.300" fill="none" stroke="#dfe2f6" stroke-width="1"/>
</svg>
<span style="position:absolute;left:1004.50px;top:1404.00px;font-size:19.6px;line-height:1;color:#222a38;white-space:pre;letter-spacing:-0.109px;">@donaltrunk</span>
<svg style="position:absolute;left:1124.4px;top:1404.0px" width="20" height="20" viewBox="-1 -1 20 20" fill="none" stroke="#6a6a6a" stroke-width="1.600" stroke-linecap="round" stroke-linejoin="round">
<path d="M0.900 5.400 V2.400 Q0.900 0.900 2.400 0.900 H5.300"/><path d="M12 0.900 H14.900 Q16.400 0.900 16.400 2.400 V5.400"/>
<path d="M0.900 12.300 V15.200 Q0.900 16.700 2.400 16.700 H5.300"/><path d="M12 16.700 H14.900 Q16.400 16.700 16.400 15.200 V12.300"/>
<path d="M0.600 8.900 H16.700"/></svg>
<span style="position:absolute;left:1338.00px;top:1405.00px;font-size:19.6px;line-height:1;color:#161616;white-space:pre;letter-spacing:1.087px;">98.3</span>
<span style="position:absolute;left:1545.00px;top:1405.00px;font-size:19.6px;line-height:1;color:#161616;white-space:pre;letter-spacing:1.254px;">98.3</span>
<span style="position:absolute;left:1741.25px;top:1405.00px;font-size:19.6px;line-height:1;color:#161616;white-space:pre;letter-spacing:1.216px;">98.3k</span>
<span style="position:absolute;left:1275.60px;top:1492.00px;font-size:18.6px;line-height:1;color:#222;white-space:pre;letter-spacing:0.003px;">1 - 50 of 500</span>
<div style="position:absolute;left:1403.6px;top:1483.500px;width:34.300px;height:34.300px;border-radius:6px;background:#f4f4f4"></div>
<svg style="position:absolute;left:1412.8px;top:1492.7px" width="16" height="16" viewBox="-8 -8 16 16" fill="none" stroke="#555" stroke-width="1.600"><path d="M2.800 -5.600L-2.800 0L2.800 5.600"/></svg>
<div style="position:absolute;left:1449.7px;top:1483.500px;width:34.300px;height:34.300px;box-sizing:border-box;border:2px solid #55a5a2;border-radius:6px;background:#fff"></div>
<span style="position:absolute;left:1462.60px;top:1491.00px;font-size:19.2px;line-height:1;color:#161616;white-space:pre;letter-spacing:0.000px;">1</span>
<div style="position:absolute;left:1495.8px;top:1483.500px;width:34.300px;height:34.300px;border-radius:6px;background:#f4f4f4"></div>
<span style="position:absolute;left:1507.70px;top:1491.00px;font-size:19.2px;line-height:1;color:#444;white-space:pre;letter-spacing:0.000px;">2</span>
<div style="position:absolute;left:1541.9px;top:1483.500px;width:34.300px;height:34.300px;border-radius:6px;background:#f4f4f4"></div>
<span style="position:absolute;left:1553.80px;top:1491.00px;font-size:19.2px;line-height:1;color:#444;white-space:pre;letter-spacing:0.000px;">3</span>
<div style="position:absolute;left:1588.0px;top:1483.500px;width:34.300px;height:34.300px;border-radius:6px;background:#f4f4f4"></div>
<span style="position:absolute;left:1599.90px;top:1491.00px;font-size:19.2px;line-height:1;color:#444;white-space:pre;letter-spacing:0.000px;">4</span>
<div style="position:absolute;left:1634.1px;top:1483.500px;width:34.300px;height:34.300px;border-radius:6px;background:#f4f4f4"></div>
<span style="position:absolute;left:1646.00px;top:1491.00px;font-size:19.2px;line-height:1;color:#444;white-space:pre;letter-spacing:0.000px;">5</span>
<div style="position:absolute;left:1680.2px;top:1483.500px;width:34.300px;height:34.300px;border-radius:6px;background:#f4f4f4"></div>
<span style="position:absolute;left:1692.10px;top:1491.00px;font-size:19.2px;line-height:1;color:#444;white-space:pre;letter-spacing:0.000px;">6</span>
<div style="position:absolute;left:1726.3px;top:1483.500px;width:34.300px;height:34.300px;border-radius:6px;background:#f4f4f4"></div>
<svg style="position:absolute;left:1735.5px;top:1492.7px" width="16" height="16" viewBox="-8 -8 16 16" fill="none" stroke="#555" stroke-width="1.600"><path d="M-2.800 -5.600L2.800 0L-2.800 5.600"/></svg>
<div style="position:absolute;left:1784.300px;top:1483.500px;width:122px;height:34.300px;border-radius:6px;background:#f4f4f4"></div>
<span style="position:absolute;left:1794.60px;top:1490.00px;font-size:21.6px;line-height:1;color:#161616;white-space:pre;letter-spacing:-0.491px;">10/page</span>
<svg style="position:absolute;left:1878px;top:1492px" width="20" height="18" viewBox="1878 1492 20 18" fill="none" stroke="#555" stroke-width="1.700"><path d="M1881.800 1497.400L1888.100 1503.600L1894.400 1497.400"/></svg>
<div style="position:absolute;left:2072px;top:80px;width:1px;height:1648px;background:rgba(120,120,120,.25);z-index:5"></div><div style="position:absolute;left:2073px;top:80px;width:1px;height:1648px;background:#7c7c7c;z-index:5"></div>
</div></body></html>
